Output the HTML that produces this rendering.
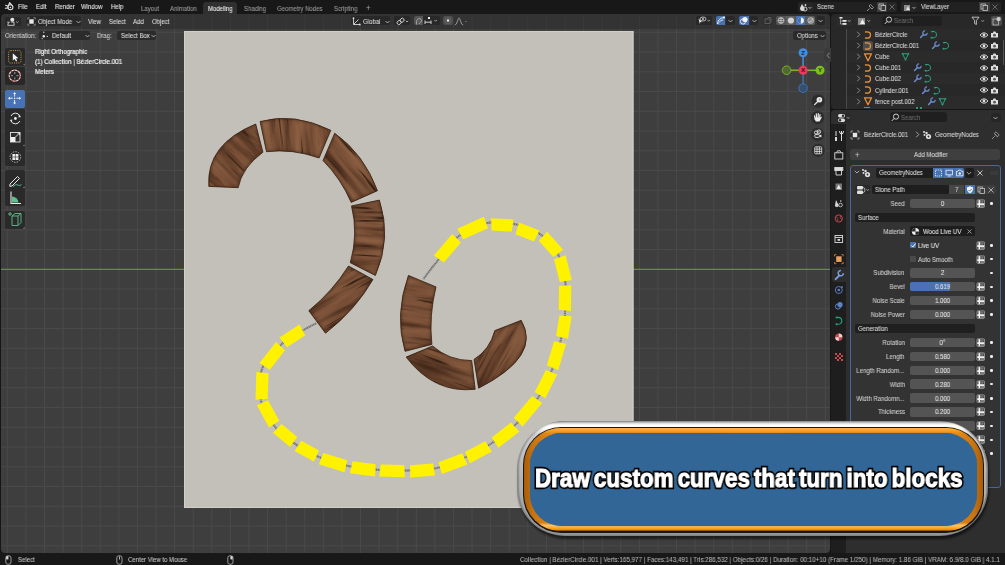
<!DOCTYPE html>
<html><head><meta charset="utf-8">
<style>
*{box-sizing:border-box;margin:0;padding:0}
html,body{width:1005px;height:565px;overflow:hidden;background:#161616}
body{-webkit-font-smoothing:antialiased;position:relative;font-family:"Liberation Sans",sans-serif;color:#d6d6d6;font-size:6.7px;line-height:1}
.a{position:absolute}
.t{position:absolute;white-space:nowrap;line-height:1;-webkit-text-stroke:0.08px currentColor;will-change:transform;transform:scaleX(0.9);transform-origin:0 50%;margin-top:0.6px}
#topbar{left:0;top:0;width:1005px;height:14px;background:#181818}
#vp{left:1px;top:14px;width:829px;height:539px;background:#3e3e3e;border-radius:4px;overflow:hidden}
#outl{left:831px;top:14px;width:174px;height:95px;background:#282828;border-radius:4px 0 0 4px;overflow:hidden}
#props{left:831px;top:110px;width:174px;height:443px;background:#2e2e2e;border-radius:4px 0 0 4px;overflow:hidden}
#status{left:0;top:553px;width:1005px;height:12px;background:#181818}
</style></head><body>
<div id="topbar" class="a"></div>
<div id="vp" class="a">
 <svg class="a" style="left:-1px;top:-14px" width="1005" height="565" viewBox="0 0 1005 565">
  <g stroke="#4a4a4a" stroke-width="1"><line x1="7.32" y1="14" x2="7.32" y2="553"/><line x1="25.91" y1="14" x2="25.91" y2="553"/><line x1="44.50" y1="14" x2="44.50" y2="553"/><line x1="63.09" y1="14" x2="63.09" y2="553"/><line x1="81.68" y1="14" x2="81.68" y2="553"/><line x1="100.27" y1="14" x2="100.27" y2="553"/><line x1="118.86" y1="14" x2="118.86" y2="553"/><line x1="137.45" y1="14" x2="137.45" y2="553"/><line x1="156.04" y1="14" x2="156.04" y2="553"/><line x1="174.63" y1="14" x2="174.63" y2="553"/><line x1="193.22" y1="14" x2="193.22" y2="553"/><line x1="211.81" y1="14" x2="211.81" y2="553"/><line x1="230.40" y1="14" x2="230.40" y2="553"/><line x1="248.99" y1="14" x2="248.99" y2="553"/><line x1="267.58" y1="14" x2="267.58" y2="553"/><line x1="286.17" y1="14" x2="286.17" y2="553"/><line x1="304.76" y1="14" x2="304.76" y2="553"/><line x1="323.35" y1="14" x2="323.35" y2="553"/><line x1="341.94" y1="14" x2="341.94" y2="553"/><line x1="360.53" y1="14" x2="360.53" y2="553"/><line x1="379.12" y1="14" x2="379.12" y2="553"/><line x1="397.71" y1="14" x2="397.71" y2="553"/><line x1="416.30" y1="14" x2="416.30" y2="553"/><line x1="434.89" y1="14" x2="434.89" y2="553"/><line x1="453.48" y1="14" x2="453.48" y2="553"/><line x1="472.07" y1="14" x2="472.07" y2="553"/><line x1="490.66" y1="14" x2="490.66" y2="553"/><line x1="509.25" y1="14" x2="509.25" y2="553"/><line x1="527.84" y1="14" x2="527.84" y2="553"/><line x1="546.43" y1="14" x2="546.43" y2="553"/><line x1="565.02" y1="14" x2="565.02" y2="553"/><line x1="583.61" y1="14" x2="583.61" y2="553"/><line x1="602.20" y1="14" x2="602.20" y2="553"/><line x1="620.79" y1="14" x2="620.79" y2="553"/><line x1="639.38" y1="14" x2="639.38" y2="553"/><line x1="657.97" y1="14" x2="657.97" y2="553"/><line x1="676.56" y1="14" x2="676.56" y2="553"/><line x1="695.15" y1="14" x2="695.15" y2="553"/><line x1="713.74" y1="14" x2="713.74" y2="553"/><line x1="732.33" y1="14" x2="732.33" y2="553"/><line x1="750.92" y1="14" x2="750.92" y2="553"/><line x1="769.51" y1="14" x2="769.51" y2="553"/><line x1="788.10" y1="14" x2="788.10" y2="553"/><line x1="806.69" y1="14" x2="806.69" y2="553"/><line x1="825.28" y1="14" x2="825.28" y2="553"/><line x1="0" y1="32.30" x2="830" y2="32.30"/><line x1="0" y1="52.05" x2="830" y2="52.05"/><line x1="0" y1="71.80" x2="830" y2="71.80"/><line x1="0" y1="91.55" x2="830" y2="91.55"/><line x1="0" y1="111.30" x2="830" y2="111.30"/><line x1="0" y1="131.05" x2="830" y2="131.05"/><line x1="0" y1="150.80" x2="830" y2="150.80"/><line x1="0" y1="170.55" x2="830" y2="170.55"/><line x1="0" y1="190.30" x2="830" y2="190.30"/><line x1="0" y1="210.05" x2="830" y2="210.05"/><line x1="0" y1="229.80" x2="830" y2="229.80"/><line x1="0" y1="249.55" x2="830" y2="249.55"/><line x1="0" y1="289.05" x2="830" y2="289.05"/><line x1="0" y1="308.80" x2="830" y2="308.80"/><line x1="0" y1="328.55" x2="830" y2="328.55"/><line x1="0" y1="348.30" x2="830" y2="348.30"/><line x1="0" y1="368.05" x2="830" y2="368.05"/><line x1="0" y1="387.80" x2="830" y2="387.80"/><line x1="0" y1="407.55" x2="830" y2="407.55"/><line x1="0" y1="427.30" x2="830" y2="427.30"/><line x1="0" y1="447.05" x2="830" y2="447.05"/><line x1="0" y1="466.80" x2="830" y2="466.80"/><line x1="0" y1="486.55" x2="830" y2="486.55"/><line x1="0" y1="506.30" x2="830" y2="506.30"/><line x1="0" y1="526.05" x2="830" y2="526.05"/><line x1="0" y1="545.80" x2="830" y2="545.80"/></g><line x1="0" y1="269.3" x2="830" y2="269.3" stroke="#6a8f2a" stroke-width="1.3"/>
  <rect x="184" y="31" width="449.5" height="477" fill="#c3c0ba"/><rect x="184.5" y="31.5" width="448.5" height="476" fill="none" stroke="#d2cfca" stroke-width="1"/>
  <defs><filter id="eblur"><feGaussianBlur stdDeviation="0.9"/></filter><clipPath id="wc0"><path d="M208.8,186.4 Q205.9,144.4 255.7,124.0 L262.9,152.2 Q241.8,167.9 238.2,187.7 L208.8,186.4 Z"/></clipPath><filter id="wf0" x="0" y="0" width="100%" height="100%" color-interpolation-filters="sRGB"><feTurbulence type="fractalNoise" baseFrequency="0.01 0.1" numOctaves="4" seed="3" result="n"/><feColorMatrix in="n" type="matrix" values="1 0 0 0 0  1 0 0 0 0  1 0 0 0 0  0 0 0 0 1" result="a"/><feComponentTransfer in="a" result="t"><feFuncR type="table" tableValues="0.15 0.27 0.39 0.48 0.53 0.57 0.63"/><feFuncG type="table" tableValues="0.08 0.16 0.25 0.32 0.36 0.40 0.44"/><feFuncB type="table" tableValues="0.05 0.10 0.17 0.22 0.25 0.28 0.32"/><feFuncA type="discrete" tableValues="1"/></feComponentTransfer><feTurbulence type="fractalNoise" baseFrequency="0.02 0.3" numOctaves="2" seed="5" result="n2"/><feColorMatrix in="n2" type="matrix" values="0 0 0 0 0.2  0 0 0 0 0.12  0 0 0 0 0.07  -7 0 0 0 2.45" result="lines0"/><feGaussianBlur in="lines0" stdDeviation="0.35" result="lines"/><feComposite in="lines" in2="t" operator="over"/></filter><clipPath id="wc1"><path d="M260.1,121.5 Q294.1,112.1 330.8,130.3 L319.1,158.0 Q292.8,148.5 266.5,151.7 L260.1,121.5 Z"/></clipPath><filter id="wf1" x="0" y="0" width="100%" height="100%" color-interpolation-filters="sRGB"><feTurbulence type="fractalNoise" baseFrequency="0.01 0.1" numOctaves="4" seed="10" result="n"/><feColorMatrix in="n" type="matrix" values="1 0 0 0 0  1 0 0 0 0  1 0 0 0 0  0 0 0 0 1" result="a"/><feComponentTransfer in="a" result="t"><feFuncR type="table" tableValues="0.15 0.27 0.39 0.48 0.53 0.57 0.63"/><feFuncG type="table" tableValues="0.08 0.16 0.25 0.32 0.36 0.40 0.44"/><feFuncB type="table" tableValues="0.05 0.10 0.17 0.22 0.25 0.28 0.32"/><feFuncA type="discrete" tableValues="1"/></feComponentTransfer><feTurbulence type="fractalNoise" baseFrequency="0.02 0.3" numOctaves="2" seed="16" result="n2"/><feColorMatrix in="n2" type="matrix" values="0 0 0 0 0.2  0 0 0 0 0.12  0 0 0 0 0.07  -7 0 0 0 2.45" result="lines0"/><feGaussianBlur in="lines0" stdDeviation="0.35" result="lines"/><feComposite in="lines" in2="t" operator="over"/></filter><clipPath id="wc2"><path d="M334.7,133.2 Q363.9,154.1 377.5,190.7 L351.2,202.4 Q340.9,178.6 323.0,160.5 L334.7,133.2 Z"/></clipPath><filter id="wf2" x="0" y="0" width="100%" height="100%" color-interpolation-filters="sRGB"><feTurbulence type="fractalNoise" baseFrequency="0.01 0.1" numOctaves="4" seed="17" result="n"/><feColorMatrix in="n" type="matrix" values="1 0 0 0 0  1 0 0 0 0  1 0 0 0 0  0 0 0 0 1" result="a"/><feComponentTransfer in="a" result="t"><feFuncR type="table" tableValues="0.15 0.27 0.39 0.48 0.53 0.57 0.63"/><feFuncG type="table" tableValues="0.08 0.16 0.25 0.32 0.36 0.40 0.44"/><feFuncB type="table" tableValues="0.05 0.10 0.17 0.22 0.25 0.28 0.32"/><feFuncA type="discrete" tableValues="1"/></feComponentTransfer><feTurbulence type="fractalNoise" baseFrequency="0.02 0.3" numOctaves="2" seed="27" result="n2"/><feColorMatrix in="n2" type="matrix" values="0 0 0 0 0.2  0 0 0 0 0.12  0 0 0 0 0.07  -7 0 0 0 2.45" result="lines0"/><feGaussianBlur in="lines0" stdDeviation="0.35" result="lines"/><feComposite in="lines" in2="t" operator="over"/></filter><clipPath id="wc3"><path d="M351.5,205.9 L379.4,200.1 Q391.8,238.2 375.4,275.5 L350.3,262.7 Q358.5,233.7 351.5,205.9 Z"/></clipPath><filter id="wf3" x="0" y="0" width="100%" height="100%" color-interpolation-filters="sRGB"><feTurbulence type="fractalNoise" baseFrequency="0.01 0.1" numOctaves="4" seed="24" result="n"/><feColorMatrix in="n" type="matrix" values="1 0 0 0 0  1 0 0 0 0  1 0 0 0 0  0 0 0 0 1" result="a"/><feComponentTransfer in="a" result="t"><feFuncR type="table" tableValues="0.15 0.27 0.39 0.48 0.53 0.57 0.63"/><feFuncG type="table" tableValues="0.08 0.16 0.25 0.32 0.36 0.40 0.44"/><feFuncB type="table" tableValues="0.05 0.10 0.17 0.22 0.25 0.28 0.32"/><feFuncA type="discrete" tableValues="1"/></feComponentTransfer><feTurbulence type="fractalNoise" baseFrequency="0.02 0.3" numOctaves="2" seed="38" result="n2"/><feColorMatrix in="n2" type="matrix" values="0 0 0 0 0.2  0 0 0 0 0.12  0 0 0 0 0.07  -7 0 0 0 2.45" result="lines0"/><feGaussianBlur in="lines0" stdDeviation="0.35" result="lines"/><feComposite in="lines" in2="t" operator="over"/></filter><clipPath id="wc4"><path d="M348.5,266.0 L372.9,279.5 Q355.8,309.6 325.5,333.2 L308.8,310.7 Q332.4,291.6 348.5,266.0 Z"/></clipPath><filter id="wf4" x="0" y="0" width="100%" height="100%" color-interpolation-filters="sRGB"><feTurbulence type="fractalNoise" baseFrequency="0.01 0.1" numOctaves="4" seed="31" result="n"/><feColorMatrix in="n" type="matrix" values="1 0 0 0 0  1 0 0 0 0  1 0 0 0 0  0 0 0 0 1" result="a"/><feComponentTransfer in="a" result="t"><feFuncR type="table" tableValues="0.15 0.27 0.39 0.48 0.53 0.57 0.63"/><feFuncG type="table" tableValues="0.08 0.16 0.25 0.32 0.36 0.40 0.44"/><feFuncB type="table" tableValues="0.05 0.10 0.17 0.22 0.25 0.28 0.32"/><feFuncA type="discrete" tableValues="1"/></feComponentTransfer><feTurbulence type="fractalNoise" baseFrequency="0.02 0.3" numOctaves="2" seed="49" result="n2"/><feColorMatrix in="n2" type="matrix" values="0 0 0 0 0.2  0 0 0 0 0.12  0 0 0 0 0.07  -7 0 0 0 2.45" result="lines0"/><feGaussianBlur in="lines0" stdDeviation="0.35" result="lines"/><feComposite in="lines" in2="t" operator="over"/></filter><clipPath id="wc5"><path d="M408.4,275.4 L436.0,286.9 Q428.8,315.8 431.9,344.4 L405.0,351.3 Q394.3,314.6 408.4,275.4 Z"/></clipPath><filter id="wf5" x="0" y="0" width="100%" height="100%" color-interpolation-filters="sRGB"><feTurbulence type="fractalNoise" baseFrequency="0.01 0.1" numOctaves="4" seed="38" result="n"/><feColorMatrix in="n" type="matrix" values="1 0 0 0 0  1 0 0 0 0  1 0 0 0 0  0 0 0 0 1" result="a"/><feComponentTransfer in="a" result="t"><feFuncR type="table" tableValues="0.15 0.27 0.39 0.48 0.53 0.57 0.63"/><feFuncG type="table" tableValues="0.08 0.16 0.25 0.32 0.36 0.40 0.44"/><feFuncB type="table" tableValues="0.05 0.10 0.17 0.22 0.25 0.28 0.32"/><feFuncA type="discrete" tableValues="1"/></feComponentTransfer><feTurbulence type="fractalNoise" baseFrequency="0.02 0.3" numOctaves="2" seed="60" result="n2"/><feColorMatrix in="n2" type="matrix" values="0 0 0 0 0.2  0 0 0 0 0.12  0 0 0 0 0.07  -7 0 0 0 2.45" result="lines0"/><feGaussianBlur in="lines0" stdDeviation="0.35" result="lines"/><feComposite in="lines" in2="t" operator="over"/></filter><clipPath id="wc6"><path d="M406.1,357.1 L432.6,346.0 Q448.9,360.5 471.7,360.6 L475.2,389.3 Q434.0,393.8 406.1,357.1 Z"/></clipPath><filter id="wf6" x="0" y="0" width="100%" height="100%" color-interpolation-filters="sRGB"><feTurbulence type="fractalNoise" baseFrequency="0.01 0.1" numOctaves="4" seed="45" result="n"/><feColorMatrix in="n" type="matrix" values="1 0 0 0 0  1 0 0 0 0  1 0 0 0 0  0 0 0 0 1" result="a"/><feComponentTransfer in="a" result="t"><feFuncR type="table" tableValues="0.15 0.27 0.39 0.48 0.53 0.57 0.63"/><feFuncG type="table" tableValues="0.08 0.16 0.25 0.32 0.36 0.40 0.44"/><feFuncB type="table" tableValues="0.05 0.10 0.17 0.22 0.25 0.28 0.32"/><feFuncA type="discrete" tableValues="1"/></feComponentTransfer><feTurbulence type="fractalNoise" baseFrequency="0.02 0.3" numOctaves="2" seed="71" result="n2"/><feColorMatrix in="n2" type="matrix" values="0 0 0 0 0.2  0 0 0 0 0.12  0 0 0 0 0.07  -7 0 0 0 2.45" result="lines0"/><feGaussianBlur in="lines0" stdDeviation="0.35" result="lines"/><feComposite in="lines" in2="t" operator="over"/></filter><clipPath id="wc7"><path d="M474.0,359.4 Q489.6,350.0 494.8,330.6 L521.2,320.3 Q542.1,355.8 478.6,388.2 L474.0,359.4 Z"/></clipPath><filter id="wf7" x="0" y="0" width="100%" height="100%" color-interpolation-filters="sRGB"><feTurbulence type="fractalNoise" baseFrequency="0.01 0.1" numOctaves="4" seed="52" result="n"/><feColorMatrix in="n" type="matrix" values="1 0 0 0 0  1 0 0 0 0  1 0 0 0 0  0 0 0 0 1" result="a"/><feComponentTransfer in="a" result="t"><feFuncR type="table" tableValues="0.15 0.27 0.39 0.48 0.53 0.57 0.63"/><feFuncG type="table" tableValues="0.08 0.16 0.25 0.32 0.36 0.40 0.44"/><feFuncB type="table" tableValues="0.05 0.10 0.17 0.22 0.25 0.28 0.32"/><feFuncA type="discrete" tableValues="1"/></feComponentTransfer><feTurbulence type="fractalNoise" baseFrequency="0.02 0.3" numOctaves="2" seed="82" result="n2"/><feColorMatrix in="n2" type="matrix" values="0 0 0 0 0.2  0 0 0 0 0.12  0 0 0 0 0.07  -7 0 0 0 2.45" result="lines0"/><feGaussianBlur in="lines0" stdDeviation="0.35" result="lines"/><feComposite in="lines" in2="t" operator="over"/></filter></defs><g clip-path="url(#wc0)"><rect x="188.5" y="111.5" width="100" height="100" fill="#80533a" transform="rotate(45 238.5 161.5)" filter="url(#wf0)"/><path d="M208.8,186.4 Q205.9,144.4 255.7,124.0 L262.9,152.2 Q241.8,167.9 238.2,187.7 L208.8,186.4 Z" fill="none" stroke="#3e2414" stroke-width="3" opacity="0.4" filter="url(#eblur)"/></g><path d="M208.8,186.4 Q205.9,144.4 255.7,124.0 L262.9,152.2 Q241.8,167.9 238.2,187.7 L208.8,186.4 Z" fill="none" stroke="#35200f" stroke-width="0.8"/><g clip-path="url(#wc1)"><rect x="244.0" y="88.7" width="100" height="100" fill="#80533a" transform="rotate(85 294.0 138.7)" filter="url(#wf1)"/><path d="M260.1,121.5 Q294.1,112.1 330.8,130.3 L319.1,158.0 Q292.8,148.5 266.5,151.7 L260.1,121.5 Z" fill="none" stroke="#3e2414" stroke-width="3" opacity="0.4" filter="url(#eblur)"/></g><path d="M260.1,121.5 Q294.1,112.1 330.8,130.3 L319.1,158.0 Q292.8,148.5 266.5,151.7 L260.1,121.5 Z" fill="none" stroke="#35200f" stroke-width="0.8"/><g clip-path="url(#wc2)"><rect x="297.6" y="120.8" width="100" height="100" fill="#80533a" transform="rotate(50 347.6 170.8)" filter="url(#wf2)"/><path d="M334.7,133.2 Q363.9,154.1 377.5,190.7 L351.2,202.4 Q340.9,178.6 323.0,160.5 L334.7,133.2 Z" fill="none" stroke="#3e2414" stroke-width="3" opacity="0.4" filter="url(#eblur)"/></g><path d="M334.7,133.2 Q363.9,154.1 377.5,190.7 L351.2,202.4 Q340.9,178.6 323.0,160.5 L334.7,133.2 Z" fill="none" stroke="#35200f" stroke-width="0.8"/><g clip-path="url(#wc3)"><rect x="316.0" y="186.0" width="100" height="100" fill="#80533a" transform="rotate(3 366.0 236.0)" filter="url(#wf3)"/><path d="M351.5,205.9 L379.4,200.1 Q391.8,238.2 375.4,275.5 L350.3,262.7 Q358.5,233.7 351.5,205.9 Z" fill="none" stroke="#3e2414" stroke-width="3" opacity="0.4" filter="url(#eblur)"/></g><path d="M351.5,205.9 L379.4,200.1 Q391.8,238.2 375.4,275.5 L350.3,262.7 Q358.5,233.7 351.5,205.9 Z" fill="none" stroke="#35200f" stroke-width="0.8"/><g clip-path="url(#wc4)"><rect x="289.8" y="247.9" width="100" height="100" fill="#80533a" transform="rotate(-30 339.8 297.9)" filter="url(#wf4)"/><path d="M348.5,266.0 L372.9,279.5 Q355.8,309.6 325.5,333.2 L308.8,310.7 Q332.4,291.6 348.5,266.0 Z" fill="none" stroke="#3e2414" stroke-width="3" opacity="0.4" filter="url(#eblur)"/></g><path d="M348.5,266.0 L372.9,279.5 Q355.8,309.6 325.5,333.2 L308.8,310.7 Q332.4,291.6 348.5,266.0 Z" fill="none" stroke="#35200f" stroke-width="0.8"/><g clip-path="url(#wc5)"><rect x="368.9" y="264.6" width="100" height="100" fill="#80533a" transform="rotate(8 418.9 314.6)" filter="url(#wf5)"/><path d="M408.4,275.4 L436.0,286.9 Q428.8,315.8 431.9,344.4 L405.0,351.3 Q394.3,314.6 408.4,275.4 Z" fill="none" stroke="#3e2414" stroke-width="3" opacity="0.4" filter="url(#eblur)"/></g><path d="M408.4,275.4 L436.0,286.9 Q428.8,315.8 431.9,344.4 L405.0,351.3 Q394.3,314.6 408.4,275.4 Z" fill="none" stroke="#35200f" stroke-width="0.8"/><g clip-path="url(#wc6)"><rect x="395.6" y="315.6" width="100" height="100" fill="#80533a" transform="rotate(20 445.6 365.6)" filter="url(#wf6)"/><path d="M406.1,357.1 L432.6,346.0 Q448.9,360.5 471.7,360.6 L475.2,389.3 Q434.0,393.8 406.1,357.1 Z" fill="none" stroke="#3e2414" stroke-width="3" opacity="0.4" filter="url(#eblur)"/></g><path d="M406.1,357.1 L432.6,346.0 Q448.9,360.5 471.7,360.6 L475.2,389.3 Q434.0,393.8 406.1,357.1 Z" fill="none" stroke="#35200f" stroke-width="0.8"/><g clip-path="url(#wc7)"><rect x="446.1" y="300.2" width="100" height="100" fill="#80533a" transform="rotate(-60 496.1 350.2)" filter="url(#wf7)"/><path d="M474.0,359.4 Q489.6,350.0 494.8,330.6 L521.2,320.3 Q542.1,355.8 478.6,388.2 L474.0,359.4 Z" fill="none" stroke="#3e2414" stroke-width="3" opacity="0.4" filter="url(#eblur)"/></g><path d="M474.0,359.4 Q489.6,350.0 494.8,330.6 L521.2,320.3 Q542.1,355.8 478.6,388.2 L474.0,359.4 Z" fill="none" stroke="#35200f" stroke-width="0.8"/>
  <path d="M316.5,323.0 L315.5,323.6 L314.1,324.3 L312.5,325.1 L310.7,326.0 L308.8,327.1 L306.7,328.2 L304.5,329.5 L302.3,330.8 L300.0,332.2 L297.4,333.6 L294.8,335.1 L292.0,336.7 L289.2,338.4 L286.4,340.3 L283.7,342.3 L281.1,344.6 L278.5,347.1 L275.8,349.8 L273.0,352.6 L270.3,355.7 L267.7,358.8 L265.5,362.1 L263.5,365.5 L262.0,369.0 L260.9,372.7 L260.1,376.6 L259.6,380.7 L259.4,384.9 L259.5,389.1 L259.8,393.2 L260.3,397.2 L261.0,401.0 L262.0,404.6 L263.3,408.1 L264.9,411.6 L266.8,414.9 L268.8,418.2 L270.9,421.3 L273.0,424.2 L275.2,427.0 L277.4,429.6 L279.8,432.0 L282.2,434.3 L284.8,436.4 L287.4,438.4 L290.1,440.3 L292.8,442.2 L295.5,444.1 L298.2,445.9 L300.9,447.7 L303.7,449.3 L306.5,450.9 L309.3,452.5 L312.3,454.0 L315.4,455.4 L318.6,456.8 L322.0,458.2 L325.6,459.5 L329.3,460.7 L333.1,462.0 L337.0,463.1 L340.8,464.2 L344.7,465.1 L348.4,466.0 L352.1,466.8 L355.8,467.4 L359.4,468.0 L363.1,468.4 L366.7,468.8 L370.4,469.2 L374.0,469.5 L377.7,469.8 L381.4,470.1 L385.1,470.3 L388.8,470.4 L392.6,470.5 L396.3,470.6 L400.0,470.6 L403.7,470.6 L407.4,470.5 L411.1,470.4 L414.7,470.3 L418.3,470.2 L422.0,470.0 L425.6,469.8 L429.2,469.4 L432.8,468.8 L436.5,468.1 L440.2,467.1 L443.9,466.0 L447.7,464.7 L451.5,463.3 L455.2,461.7 L458.9,460.2 L462.5,458.6 L466.0,457.0 L469.4,455.4 L472.7,453.9 L476.0,452.2 L479.1,450.6 L482.3,448.9 L485.4,447.1 L488.5,445.2 L491.6,443.2 L494.7,441.1 L497.8,439.0 L500.8,436.9 L503.9,434.6 L506.9,432.2 L509.8,429.8 L512.8,427.2 L515.7,424.4 L518.6,421.5 L521.6,418.3 L524.6,415.0 L527.5,411.6 L530.3,408.2 L533.1,404.7 L535.6,401.2 L538.0,397.8 L540.2,394.4 L542.2,391.0 L544.0,387.6 L545.7,384.2 L547.4,380.8 L548.9,377.3 L550.4,373.8 L551.8,370.2 L553.2,366.5 L554.5,362.8 L555.7,358.9 L556.9,355.1 L558.0,351.2 L559.0,347.4 L559.9,343.7 L560.8,340.1 L561.6,336.6 L562.3,333.3 L562.9,330.0 L563.4,326.8 L563.9,323.6 L564.3,320.3 L564.7,317.0 L565.0,313.5 L565.3,309.9 L565.6,306.2 L565.8,302.5 L566.0,298.7 L566.0,294.9 L566.0,291.1 L565.8,287.3 L565.5,283.6 L565.0,279.9 L564.5,276.1 L563.9,272.4 L563.1,268.6 L562.2,265.0 L561.1,261.4 L559.8,258.0 L558.3,254.8 L556.5,251.7 L554.5,248.7 L552.3,245.9 L550.0,243.1 L547.5,240.5 L544.9,238.1 L542.2,235.8 L539.5,233.8 L536.7,232.0 L533.9,230.4 L530.9,229.0 L527.8,227.8 L524.7,226.7 L521.6,225.8 L518.4,224.9 L515.2,224.2 L512.0,223.5 L508.8,222.9 L505.6,222.4 L502.3,222.0 L499.0,221.9 L495.6,221.9 L492.1,222.2 L488.6,222.8 L484.9,223.7 L481.0,225.0 L477.0,226.4 L473.0,228.1 L469.0,230.0 L465.1,232.1 L461.5,234.3 L458.2,236.5 L455.2,238.9 L452.5,241.6 L449.9,244.5 L447.6,247.5 L445.3,250.5 L443.1,253.5 L441.0,256.4 L438.8,259.2 L436.6,262.0 L434.3,264.8 L432.0,267.7 L429.8,270.6 L427.8,273.2 L426.0,275.6 L424.5,277.6 L423.3,279.1 L423.3,279.1" fill="none" stroke="#6c6c6c" stroke-width="1.9"/><path d="M316.5,323.0 L315.5,323.6 L314.1,324.3 L312.5,325.1 L310.7,326.0 L308.8,327.1 L306.7,328.2 L304.5,329.5 L302.3,330.8 L300.0,332.2 L297.4,333.6 L294.8,335.1 L292.0,336.7 L289.2,338.4 L286.4,340.3 L283.7,342.3 L281.1,344.6 L278.5,347.1 L275.8,349.8 L273.0,352.6 L270.3,355.7 L267.7,358.8 L265.5,362.1 L263.5,365.5 L262.0,369.0 L260.9,372.7 L260.1,376.6 L259.6,380.7 L259.4,384.9 L259.5,389.1 L259.8,393.2 L260.3,397.2 L261.0,401.0 L262.0,404.6 L263.3,408.1 L264.9,411.6 L266.8,414.9 L268.8,418.2 L270.9,421.3 L273.0,424.2 L275.2,427.0 L277.4,429.6 L279.8,432.0 L282.2,434.3 L284.8,436.4 L287.4,438.4 L290.1,440.3 L292.8,442.2 L295.5,444.1 L298.2,445.9 L300.9,447.7 L303.7,449.3 L306.5,450.9 L309.3,452.5 L312.3,454.0 L315.4,455.4 L318.6,456.8 L322.0,458.2 L325.6,459.5 L329.3,460.7 L333.1,462.0 L337.0,463.1 L340.8,464.2 L344.7,465.1 L348.4,466.0 L352.1,466.8 L355.8,467.4 L359.4,468.0 L363.1,468.4 L366.7,468.8 L370.4,469.2 L374.0,469.5 L377.7,469.8 L381.4,470.1 L385.1,470.3 L388.8,470.4 L392.6,470.5 L396.3,470.6 L400.0,470.6 L403.7,470.6 L407.4,470.5 L411.1,470.4 L414.7,470.3 L418.3,470.2 L422.0,470.0 L425.6,469.8 L429.2,469.4 L432.8,468.8 L436.5,468.1 L440.2,467.1 L443.9,466.0 L447.7,464.7 L451.5,463.3 L455.2,461.7 L458.9,460.2 L462.5,458.6 L466.0,457.0 L469.4,455.4 L472.7,453.9 L476.0,452.2 L479.1,450.6 L482.3,448.9 L485.4,447.1 L488.5,445.2 L491.6,443.2 L494.7,441.1 L497.8,439.0 L500.8,436.9 L503.9,434.6 L506.9,432.2 L509.8,429.8 L512.8,427.2 L515.7,424.4 L518.6,421.5 L521.6,418.3 L524.6,415.0 L527.5,411.6 L530.3,408.2 L533.1,404.7 L535.6,401.2 L538.0,397.8 L540.2,394.4 L542.2,391.0 L544.0,387.6 L545.7,384.2 L547.4,380.8 L548.9,377.3 L550.4,373.8 L551.8,370.2 L553.2,366.5 L554.5,362.8 L555.7,358.9 L556.9,355.1 L558.0,351.2 L559.0,347.4 L559.9,343.7 L560.8,340.1 L561.6,336.6 L562.3,333.3 L562.9,330.0 L563.4,326.8 L563.9,323.6 L564.3,320.3 L564.7,317.0 L565.0,313.5 L565.3,309.9 L565.6,306.2 L565.8,302.5 L566.0,298.7 L566.0,294.9 L566.0,291.1 L565.8,287.3 L565.5,283.6 L565.0,279.9 L564.5,276.1 L563.9,272.4 L563.1,268.6 L562.2,265.0 L561.1,261.4 L559.8,258.0 L558.3,254.8 L556.5,251.7 L554.5,248.7 L552.3,245.9 L550.0,243.1 L547.5,240.5 L544.9,238.1 L542.2,235.8 L539.5,233.8 L536.7,232.0 L533.9,230.4 L530.9,229.0 L527.8,227.8 L524.7,226.7 L521.6,225.8 L518.4,224.9 L515.2,224.2 L512.0,223.5 L508.8,222.9 L505.6,222.4 L502.3,222.0 L499.0,221.9 L495.6,221.9 L492.1,222.2 L488.6,222.8 L484.9,223.7 L481.0,225.0 L477.0,226.4 L473.0,228.1 L469.0,230.0 L465.1,232.1 L461.5,234.3 L458.2,236.5 L455.2,238.9 L452.5,241.6 L449.9,244.5 L447.6,247.5 L445.3,250.5 L443.1,253.5 L441.0,256.4 L438.8,259.2 L436.6,262.0 L434.3,264.8 L432.0,267.7 L429.8,270.6 L427.8,273.2 L426.0,275.6 L424.5,277.6 L423.3,279.1 L423.3,279.1" fill="none" stroke="#b4b4b4" stroke-width="1.9" stroke-dasharray="0.7 1.1"/><path d="M299.40,324.52 L279.54,337.45 L287.04,347.13 L305.22,335.29Z M276.05,341.99 L259.54,363.09 L269.76,369.82 L285.04,350.30Z M256.34,371.91 L255.47,399.71 L267.69,399.09 L268.50,373.29Z M256.85,405.27 L269.04,427.58 L279.27,420.86 L268.04,400.30Z M273.03,432.67 L290.11,447.06 L297.21,437.09 L281.65,423.98Z M294.55,450.91 L313.97,461.58 L318.97,450.41 L301.31,440.70Z M318.81,464.25 L344.59,472.21 L347.24,460.26 L323.36,452.89Z M349.95,473.22 L375.08,476.48 L375.66,464.25 L352.51,461.25Z M379.41,476.60 L404.91,477.20 L404.19,464.98 L380.69,464.42Z M410.14,477.51 L435.06,475.45 L433.06,463.38 L410.14,465.27Z M441.86,474.02 L467.43,464.40 L462.20,453.33 L438.50,462.25Z M469.94,463.27 L491.85,451.47 L485.18,441.20 L465.03,452.06Z M498.46,447.82 L519.25,431.60 L510.95,422.60 L491.74,437.58Z M522.57,426.41 L542.18,403.03 L532.18,395.96 L513.87,417.81Z M545.30,398.35 L557.22,374.51 L545.86,369.94 L534.83,392.00Z M558.25,369.89 L566.04,343.81 L554.07,341.27 L546.84,365.43Z M568.05,338.78 L571.60,316.33 L559.39,315.41 L556.16,335.89Z M570.88,310.95 L571.31,285.25 L559.10,286.05 L558.70,309.75Z M571.81,280.08 L565.63,255.36 L554.03,259.29 L559.73,282.07Z M563.14,249.67 L547.15,231.80 L538.72,240.68 L553.39,257.06Z M539.44,230.56 L519.04,222.50 L515.49,234.21 L534.03,241.53Z M513.52,219.40 L491.12,218.22 L491.48,230.45 L511.88,231.53Z M483.88,216.65 L457.31,228.63 L463.23,239.34 L487.98,228.19Z M452.24,233.90 L433.88,255.38 L443.81,262.54 L460.87,242.58Z" fill="#fff200"/>
 </svg>
</div>
<div id="outl" class="a"></div>
<div id="props" class="a"></div>
<div id="status" class="a"></div>

<!-- TOP BAR -->
<svg class="a" style="left:3px;top:1px" width="12" height="12" viewBox="3 1 12 12"><circle cx="10.4" cy="7.3" r="2.5" fill="none" stroke="#e4e4e4" stroke-width="1.1"/><circle cx="10.4" cy="7.5" r="0.8" fill="#e4e4e4"/><path d="M8.6,5.2 L9.6,2.6 L11.5,4.8 M8.2,6.2 L5.6,5.3 M8.2,7.9 L5.3,8.3" fill="none" stroke="#e4e4e4" stroke-width="1.1" stroke-linecap="round" stroke-linejoin="round"/></svg>
<div class="t" style="left:18.3px;top:3.8px;color:#e6e6e6">File</div>
<div class="t" style="left:35.8px;top:3.8px;color:#e6e6e6">Edit</div>
<div class="t" style="left:54.7px;top:3.8px;color:#e6e6e6">Render</div>
<div class="t" style="left:80.6px;top:3.8px;color:#e6e6e6">Window</div>
<div class="t" style="left:110.8px;top:3.8px;color:#e6e6e6">Help</div>
<div class="a" style="left:203.4px;top:2px;width:34px;height:12px;background:#303030;border-radius:3px 3px 0 0"></div>
<div class="t" style="left:141.2px;top:5.3px;color:#9a9a9a">Layout</div>
<div class="t" style="left:169.8px;top:5.3px;color:#9a9a9a">Animation</div>
<div class="t" style="left:207.6px;top:5.3px;color:#f0f0f0">Modeling</div>
<div class="t" style="left:243.9px;top:5.3px;color:#9a9a9a">Shading</div>
<div class="t" style="left:276.8px;top:5.3px;color:#9a9a9a">Geometry Nodes</div>
<div class="t" style="left:333.5px;top:5.3px;color:#9a9a9a">Scripting</div>
<div class="t" style="left:366px;top:3.6px;color:#b0b0b0;font-size:8.5px">+</div>
<!-- scene selector -->
<div class="a" style="left:797.5px;top:2px;width:16px;height:10px;background:#262626;border-radius:2px"></div>
<svg class="a" style="left:799px;top:2.5px" width="14" height="9" viewBox="0 0 14 9"><path d="M3,1 L1,5 Q1,8 3.5,8 Q6,8 5.5,5 Z" fill="#d8d8d8"/><circle cx="6" cy="6" r="2" fill="none" stroke="#d8d8d8" stroke-width="0.9"/><circle cx="6.5" cy="2" r="0.9" fill="#d8d8d8"/><path d="M9.5,4 L11,5.5 L12.5,4" fill="none" stroke="#c8c8c8" stroke-width="0.8"/></svg>
<div class="a" style="left:814.2px;top:2px;width:62.4px;height:10px;background:#212121"></div>
<div class="t" style="left:817.4px;top:3.9px;color:#dcdcdc">Scene</div>
<svg class="a" style="left:866px;top:2.5px" width="9" height="9" viewBox="0 0 9 9"><path d="M1,8 L3.5,5.5 M3,3 L6,6 M4.5,1.5 L7.5,4.5 L6,6 L3,3 Z" fill="none" stroke="#9a9a9a" stroke-width="0.9"/></svg>
<div class="a" style="left:876.6px;top:2px;width:10.7px;height:10px;background:#3b3b3b"></div>
<svg class="a" style="left:877.5px;top:3px" width="9" height="8" viewBox="0 0 9 8"><rect x="1" y="1" width="4.5" height="5" fill="none" stroke="#c8c8c8" stroke-width="0.8"/><rect x="3" y="2.5" width="4.5" height="5" fill="#3b3b3b" stroke="#c8c8c8" stroke-width="0.8"/></svg>
<div class="a" style="left:887.3px;top:2px;width:9.7px;height:10px;background:#252525;border-radius:0 2px 2px 0"></div>
<svg class="a" style="left:889px;top:4px" width="6" height="6" viewBox="0 0 6 6"><path d="M0.5,0.5 L5.5,5.5 M5.5,0.5 L0.5,5.5" stroke="#777" stroke-width="0.8"/></svg>
<div class="a" style="left:901.3px;top:2px;width:15.4px;height:10px;background:#262626;border-radius:2px"></div>
<svg class="a" style="left:902.5px;top:2.5px" width="14" height="9" viewBox="0 0 14 9"><rect x="1" y="2" width="6" height="6" fill="#8a8a8a"/><path d="M3,7 L5,3 L7,7 Z" fill="#e0e0e0"/><path d="M9.5,4 L11,5.5 L12.5,4" fill="none" stroke="#c8c8c8" stroke-width="0.8"/></svg>
<div class="a" style="left:917.3px;top:2px;width:62px;height:10px;background:#212121"></div>
<div class="t" style="left:920.5px;top:3.9px;color:#dcdcdc">ViewLayer</div>
<div class="a" style="left:979.3px;top:2px;width:10.7px;height:10px;background:#3b3b3b"></div>
<svg class="a" style="left:980.2px;top:3px" width="9" height="8" viewBox="0 0 9 8"><rect x="1" y="1" width="4.5" height="5" fill="none" stroke="#c8c8c8" stroke-width="0.8"/><rect x="3" y="2.5" width="4.5" height="5" fill="#3b3b3b" stroke="#c8c8c8" stroke-width="0.8"/></svg>
<div class="a" style="left:990px;top:2px;width:10.7px;height:10px;background:#252525;border-radius:0 2px 2px 0"></div>
<svg class="a" style="left:992.3px;top:4px" width="6" height="6" viewBox="0 0 6 6"><path d="M0.5,0.5 L5.5,5.5 M5.5,0.5 L0.5,5.5" stroke="#777" stroke-width="0.8"/></svg>

<!-- HEADER -->
<div class="a" style="left:1px;top:14px;width:829px;height:15px;background:rgba(40,40,40,0.5);border-radius:4px 4px 0 0"></div>
<!-- editor type -->
<div class="a" style="left:5px;top:16.5px;width:15.5px;height:9.5px;background:#282828;border-radius:2px"></div>
<svg class="a" style="left:6px;top:16.5px" width="14" height="10" viewBox="0 0 14 10"><circle cx="6.3" cy="2.8" r="2" fill="#e4e4e4"/><path d="M1.2,5.2 L3.8,5.2 M5.2,5.2 L8.6,5.2 M1.5,8.3 L8.5,8.3 M2.4,5.6 L1.8,8 M7.8,5.6 L8.3,8" fill="none" stroke="#d0d0d0" stroke-width="0.9"/><path d="M10.2,4.5 L11.3,5.6 L12.4,4.5" fill="none" stroke="#c8c8c8" stroke-width="0.8"/></svg>
<!-- object mode -->
<div class="a" style="left:25.5px;top:16.3px;width:55px;height:9.8px;background:#282828;border-radius:2px"></div>
<svg class="a" style="left:27px;top:16.8px" width="9" height="9" viewBox="0 0 9 9"><rect x="2.3" y="2.3" width="4.4" height="4.4" fill="#e8e8e8"/><path d="M0.8,2.5 L0.8,0.8 L2.5,0.8 M6.5,0.8 L8.2,0.8 L8.2,2.5 M8.2,6.5 L8.2,8.2 L6.5,8.2 M2.5,8.2 L0.8,8.2 L0.8,6.5" fill="none" stroke="#bcbcbc" stroke-width="0.7"/></svg>
<div class="t" style="left:37.8px;top:18px;color:#dedede">Object Mode</div>
<svg class="a" style="left:76px;top:19.5px" width="5" height="4" viewBox="0 0 5 4"><path d="M0.5,1 L2.5,3 L4.5,1" fill="none" stroke="#c8c8c8" stroke-width="0.8"/></svg>
<div class="t" style="left:87.6px;top:18px;color:#dedede">View</div>
<div class="t" style="left:108.5px;top:18px;color:#dedede">Select</div>
<div class="t" style="left:133.3px;top:18px;color:#dedede">Add</div>
<div class="t" style="left:152.2px;top:18px;color:#dedede">Object</div>
<!-- Global etc -->
<div class="a" style="left:351px;top:16.3px;width:39px;height:9px;background:#282828;border-radius:2px"></div>
<svg class="a" style="left:352px;top:16.5px" width="9" height="9" viewBox="0 0 9 9"><path d="M1.5,1 L1.5,7.5 L8,7.5 M1.5,7.5 L6.5,2.5" fill="none" stroke="#d8d8d8" stroke-width="0.9"/><circle cx="1.5" cy="1.2" r="0.9" fill="#e0e0e0"/><circle cx="7.8" cy="7.5" r="0.9" fill="#e0e0e0"/></svg>
<div class="t" style="left:363.2px;top:18px;color:#dedede">Global</div>
<svg class="a" style="left:385px;top:19.5px" width="5" height="4" viewBox="0 0 5 4"><path d="M0.5,1 L2.5,3 L4.5,1" fill="none" stroke="#c8c8c8" stroke-width="0.8"/></svg>
<div class="a" style="left:394.3px;top:16.3px;width:15.3px;height:9px;background:#282828;border-radius:2px"></div>
<svg class="a" style="left:395.5px;top:16.5px" width="14" height="9" viewBox="0 0 14 9"><g fill="none" stroke="#dcdcdc" stroke-width="0.9"><rect x="1" y="3.8" width="4.2" height="3.6" rx="1.8" transform="rotate(-40 3 5.6)"/><rect x="4" y="1.5" width="4.2" height="3.6" rx="1.8" transform="rotate(-40 6 3.3)"/></g><path d="M9.8,3.8 L11,5 L12.2,3.8" fill="none" stroke="#c8c8c8" stroke-width="0.8"/></svg>
<div class="a" style="left:413.8px;top:16.3px;width:25.8px;height:9px;background:#282828;border-radius:2px"></div>
<div class="a" style="left:413.8px;top:16.3px;width:9px;height:9px;background:#565656;border-radius:2px 0 0 2px"></div>
<svg class="a" style="left:414.5px;top:16.5px" width="8" height="9" viewBox="0 0 8 9"><path d="M1.5,7.5 Q1,2 4,1.5 Q7,1.5 6.5,4.5 Q5,5 4,7" fill="none" stroke="#a8a8a8" stroke-width="0.9"/></svg>
<svg class="a" style="left:423.5px;top:16.3px" width="16" height="9" viewBox="0 0 16 9"><path d="M1,4.5 L1,8 M1,6.2 L7,6.2 M7,4.5 L7,8" fill="none" stroke="#e0e0e0" stroke-width="0.9"/><rect x="4" y="1" width="2" height="2" fill="#f0f0f0"/><path d="M10.5,4 L11.7,5.2 L12.9,4" fill="none" stroke="#c8c8c8" stroke-width="0.8"/></svg>
<div class="a" style="left:443px;top:16.3px;width:10px;height:9px;background:#4e4e4e;border-radius:2px"></div>
<svg class="a" style="left:443px;top:16.3px" width="10" height="9" viewBox="0 0 10 9"><circle cx="5" cy="4.5" r="3" fill="none" stroke="#6a6a6a" stroke-width="0.8"/><circle cx="5" cy="4.5" r="1.2" fill="#e8e8e8"/></svg>
<svg class="a" style="left:454px;top:16.5px" width="15" height="9" viewBox="0 0 15 9"><path d="M0.8,8 Q2.5,8 3.5,4 Q4.5,0.8 5,0.8 Q5.5,0.8 6.5,4 Q7.5,8 9.2,8" fill="none" stroke="#aaaaaa" stroke-width="0.8"/><path d="M11,4 L12,5 L13,4" fill="none" stroke="#777" stroke-width="0.7"/></svg>
<!-- right header -->
<div class="a" style="left:696.3px;top:16.3px;width:15.3px;height:9px;background:#282828;border-radius:2px"></div>
<svg class="a" style="left:696px;top:16.3px" width="16" height="9" viewBox="0 0 16 9"><ellipse cx="7" cy="3" rx="3" ry="2" fill="none" stroke="#d8d8d8" stroke-width="0.8"/><circle cx="7" cy="3" r="0.9" fill="#d8d8d8"/><path d="M2.5,2.5 L6,6 L4,6.3 L4,8.5 Z" fill="#f0f0f0"/><path d="M11.5,4 L12.7,5.2 L13.9,4" fill="none" stroke="#c8c8c8" stroke-width="0.8"/></svg>
<div class="a" style="left:715.5px;top:16.3px;width:9.5px;height:9px;background:#4772b3;border-radius:2px 0 0 2px"></div>
<svg class="a" style="left:715.5px;top:16.3px" width="10" height="9" viewBox="0 0 10 9"><path d="M1.5,8 Q2,2 8,1.5 M1.5,8 L3,6.5 M3.5,6 Q4.5,4 7,3.8" fill="none" stroke="#f4f4f4" stroke-width="0.9"/><circle cx="8" cy="1.6" r="1" fill="#fff"/></svg>
<div class="a" style="left:726.3px;top:16.3px;width:8.5px;height:9px;background:#282828;border-radius:0 2px 2px 0"></div>
<svg class="a" style="left:728px;top:19.3px" width="5" height="4" viewBox="0 0 5 4"><path d="M0.5,1 L2.5,3 L4.5,1" fill="none" stroke="#c8c8c8" stroke-width="0.8"/></svg>
<div class="a" style="left:739px;top:16.3px;width:9.5px;height:9px;background:#4772b3;border-radius:2px 0 0 2px"></div>
<svg class="a" style="left:739px;top:16.3px" width="10" height="9" viewBox="0 0 10 9"><circle cx="4" cy="5.5" r="2.6" fill="none" stroke="#f0f0f0" stroke-width="0.9"/><circle cx="6" cy="3.5" r="2.6" fill="#f4f4f4"/></svg>
<div class="a" style="left:749.8px;top:16.3px;width:8.5px;height:9px;background:#282828;border-radius:0 2px 2px 0"></div>
<svg class="a" style="left:751.5px;top:19.3px" width="5" height="4" viewBox="0 0 5 4"><path d="M0.5,1 L2.5,3 L4.5,1" fill="none" stroke="#c8c8c8" stroke-width="0.8"/></svg>
<div class="a" style="left:763px;top:16.3px;width:9.2px;height:9px;background:#2e2e2e;border-radius:2px"></div>
<svg class="a" style="left:763px;top:16.3px" width="10" height="9" viewBox="0 0 10 9"><rect x="2" y="3" width="5" height="4.5" fill="none" stroke="#666" stroke-width="0.8"/><path d="M3.5,3 L5,1.5 L8,1.5 L8,5.5 L7,7" fill="none" stroke="#666" stroke-width="0.8"/></svg>
<div class="a" style="left:775.7px;top:16.3px;width:39.6px;height:9px;background:#545454;border-radius:2px"></div>
<div class="a" style="left:785.6px;top:16.3px;width:9.9px;height:9px;background:#5e5e5e"></div>
<div class="a" style="left:795.5px;top:16.3px;width:9.9px;height:9px;background:#4772b3"></div>
<div class="a" style="left:805.4px;top:16.3px;width:9.9px;height:9px;background:#595959;border-radius:0 2px 2px 0"></div>
<svg class="a" style="left:775.7px;top:16.3px" width="40" height="9" viewBox="0 0 40 9"><g fill="none" stroke="#cfcfcf" stroke-width="0.7"><circle cx="5" cy="4.5" r="3"/><path d="M2,4.5 L8,4.5 M3,2.7 L7,2.7 M3,6.3 L7,6.3 M5,1.5 L5,7.5"/></g><circle cx="14.9" cy="4.5" r="3.1" fill="#d4d4d4"/><circle cx="24.8" cy="4.5" r="3.1" fill="#f2f2f2"/><path d="M24.8,1.4 A3.1,3.1 0 0 0 24.8,7.6 Z" fill="#4772b3"/><path d="M24.8,1.4 L24.8,4.5 L21.8,4.5" fill="#4772b3"/><circle cx="34.7" cy="4.5" r="3" fill="#8a8a8a" stroke="#cfcfcf" stroke-width="0.6"/><path d="M32.5,6.5 Q36,6 37,2.5" fill="none" stroke="#ddd" stroke-width="0.7"/></svg>
<div class="a" style="left:816.7px;top:16.3px;width:8px;height:9px;background:#282828;border-radius:2px"></div>
<svg class="a" style="left:818.3px;top:19.3px" width="5" height="4" viewBox="0 0 5 4"><path d="M0.5,1 L2.5,3 L4.5,1" fill="none" stroke="#c8c8c8" stroke-width="0.8"/></svg>
<!-- tool settings -->
<div class="t" style="left:4.7px;top:32.3px;color:#cfcfcf">Orientation:</div>
<div class="a" style="left:39.3px;top:30.5px;width:50.3px;height:9.8px;background:#2b2b2b;border-radius:2px"></div>
<svg class="a" style="left:40.5px;top:30.8px" width="9" height="9" viewBox="0 0 9 9"><circle cx="2.8" cy="1.2" r="0.7" fill="#cfcfcf"/><circle cx="2.8" cy="5.2" r="1.2" fill="#f2f2f2"/><circle cx="6.3" cy="5.4" r="0.7" fill="#cfcfcf"/><circle cx="1.2" cy="7.6" r="0.7" fill="#cfcfcf"/></svg>
<div class="t" style="left:51.5px;top:32.3px;color:#dedede">Default</div>
<svg class="a" style="left:84.5px;top:33.5px" width="5" height="4" viewBox="0 0 5 4"><path d="M0.5,1 L2.5,3 L4.5,1" fill="none" stroke="#c8c8c8" stroke-width="0.8"/></svg>
<div class="t" style="left:97px;top:32.3px;color:#cfcfcf">Drag:</div>
<div class="a" style="left:117.4px;top:30.5px;width:38.8px;height:9.8px;background:#2b2b2b;border-radius:2px"></div>
<div class="t" style="left:120.8px;top:32.3px;color:#dedede">Select Box</div>
<svg class="a" style="left:150.5px;top:33.5px" width="5" height="4" viewBox="0 0 5 4"><path d="M0.5,1 L2.5,3 L4.5,1" fill="none" stroke="#c8c8c8" stroke-width="0.8"/></svg>
<!-- overlay text -->
<div class="t" style="left:34.8px;top:48.5px;color:#f4f4f4;font-size:6.9px;-webkit-text-stroke:0.2px #f4f4f4">Right Orthographic</div>
<div class="t" style="left:34.8px;top:58.3px;color:#f4f4f4;font-size:6.9px;-webkit-text-stroke:0.2px #f4f4f4">(1) Collection | BézierCircle.001</div>
<div class="t" style="left:34.8px;top:68.5px;color:#f4f4f4;font-size:6.9px;-webkit-text-stroke:0.2px #f4f4f4">Meters</div>
<!-- options -->
<div class="a" style="left:793.2px;top:30.8px;width:33px;height:9px;background:#2a2a2a;border-radius:2px"></div>
<div class="t" style="left:796.5px;top:32.5px;color:#d8d8d8">Options</div>
<svg class="a" style="left:820px;top:33.8px" width="5" height="4" viewBox="0 0 5 4"><path d="M0.5,1 L2.5,3 L4.5,1" fill="none" stroke="#c8c8c8" stroke-width="0.8"/></svg>
<div class="a" style="left:824px;top:48px;width:7px;height:14px;background:#3a3a3a;border-radius:3px 0 0 3px"></div>
<svg class="a" style="left:825.5px;top:51.5px" width="5" height="7" viewBox="0 0 5 7"><path d="M3.5,0.8 L1.2,3.5 L3.5,6.2" fill="none" stroke="#a0a0a0" stroke-width="0.8"/></svg>
<!-- gizmo -->
<svg class="a" style="left:775px;top:44px" width="55" height="55" viewBox="775 44 55 55">
 <line x1="803.1" y1="70.2" x2="803.1" y2="52.7" stroke="#4a8fde" stroke-width="1.5"/>
 <line x1="803.1" y1="70.2" x2="803.1" y2="88.2" stroke="#3d72b0" stroke-width="1.5"/>
 <line x1="786.6" y1="70.2" x2="820" y2="70.2" stroke="#7ab52a" stroke-width="1.5"/>
 <circle cx="786.6" cy="70.2" r="4.3" fill="#4f6a2c" stroke="#7ab52a" stroke-width="0.9"/>
 <circle cx="803.1" cy="88.2" r="4.3" fill="#34506e" stroke="#3d76c4" stroke-width="0.9"/>
 <circle cx="803.1" cy="52.7" r="4.5" fill="#3d8ee6"/>
 <circle cx="820" cy="70.2" r="4.5" fill="#7dbf1c"/>
 <circle cx="803.1" cy="70.2" r="4.5" fill="#f0395a"/>
 <text x="803.1" y="55" font-family="Liberation Sans" font-weight="bold" font-size="6.2" fill="#1b2a3a" text-anchor="middle">Z</text>
 <text x="820" y="72.4" font-family="Liberation Sans" font-weight="bold" font-size="6.2" fill="#1e2e0c" text-anchor="middle">Y</text>
 <text x="803.1" y="72.4" font-family="Liberation Sans" font-weight="bold" font-size="6.2" fill="#3a0a10" text-anchor="middle">X</text>
</svg>
<!-- nav buttons -->
<svg class="a" style="left:808px;top:92px" width="20" height="68" viewBox="808 92 20 68">
 <circle cx="818.2" cy="101" r="6.6" fill="#2c2c2c"/>
 <circle cx="819.4" cy="99.7" r="2.8" fill="#e8e8e8"/><circle cx="819.6" cy="99.5" r="0.9" fill="#9a9a9a"/><line x1="817.5" y1="101.7" x2="814.6" y2="104.6" stroke="#e8e8e8" stroke-width="1.3" stroke-linecap="round"/>
 <circle cx="817.5" cy="117.7" r="6.6" fill="#2c2c2c"/>
 <path d="M815.2,119.5 L814.6,115.8 M816.6,118.5 L816.3,113.9 M818.1,118.5 L818.3,113.6 M819.5,119 L820,114.6" fill="none" stroke="#eeeeee" stroke-width="1.2" stroke-linecap="round"/>
 <path d="M814.8,117.5 L820.2,117.5 L821.6,116.5 Q822,117 821.2,118.5 L819.5,121.5 L815.8,121.5 Q814.8,120 814.8,117.5 Z" fill="#eeeeee"/>
 <circle cx="817.5" cy="134.4" r="6.6" fill="#2c2c2c"/>
 <circle cx="816" cy="132.5" r="1.6" fill="none" stroke="#e8e8e8" stroke-width="0.9"/><circle cx="818.9" cy="131.7" r="1.8" fill="none" stroke="#e8e8e8" stroke-width="0.9"/><circle cx="818.9" cy="131.7" r="0.6" fill="#e8e8e8"/><rect x="814.8" y="134.6" width="4.6" height="2.8" rx="0.8" fill="none" stroke="#e8e8e8" stroke-width="0.9"/><path d="M819.6,135.4 L821.4,134.4 L821.4,137.6 L819.6,136.6 Z" fill="#e8e8e8"/>
 <circle cx="818.2" cy="150.3" r="6.6" fill="#2c2c2c"/>
 <g stroke="#e8e8e8" stroke-width="0.75" fill="none"><rect x="814.7" y="146.8" width="7" height="7" rx="1"/><path d="M817.03,146.8 L817.03,153.8 M819.37,146.8 L819.37,153.8 M814.7,149.13 L821.7,149.13 M814.7,151.47 L821.7,151.47"/></g>
</svg>

<!-- TOOLBAR -->
<div class="a" style="left:5.1px;top:47.9px;width:20.4px;height:17.8px;background:#282828;border-radius:2px"></div>
<div class="a" style="left:5.1px;top:66.9px;width:20.4px;height:17.8px;background:#282828;border-radius:2px"></div>
<div class="a" style="left:5.3px;top:89.5px;width:20.2px;height:18.2px;background:#4772b3;border-radius:2px"></div>
<div class="a" style="left:5.3px;top:108.5px;width:20.2px;height:19.5px;background:#2a2a2a;border-radius:2px 2px 0 0"></div>
<div class="a" style="left:5.3px;top:128px;width:20.2px;height:19px;background:#2a2a2a"></div>
<div class="a" style="left:5.3px;top:147px;width:20.2px;height:19px;background:#2a2a2a;border-radius:0 0 2px 2px"></div>
<div class="a" style="left:5.3px;top:170.4px;width:20.2px;height:18px;background:#2a2a2a;border-radius:2px 2px 0 0"></div>
<div class="a" style="left:5.3px;top:188.4px;width:20.2px;height:18px;background:#2a2a2a;border-radius:0 0 2px 2px"></div>
<div class="a" style="left:5.3px;top:210.8px;width:20.2px;height:18.5px;background:#2a2a2a;border-radius:2px"></div>
<svg class="a" style="left:0;top:40px" width="30" height="195" viewBox="0 40 30 195">
 <!-- select box -->
 <rect x="8.6" y="50.6" width="12.4" height="12.4" rx="2" fill="none" stroke="#c8963c" stroke-width="1" stroke-dasharray="1.1 1.1"/>
 <path d="M12.8,53.2 L12.8,60.6 L14.6,58.9 L16,61.6 L17.2,61 L15.9,58.4 L18.3,58.2 Z" fill="#f4f4f4"/>
 <path d="M24.6,63.6 L24.6,65.1 L23.1,65.1 Z" fill="#999"/>
 <!-- cursor -->
 <circle cx="14.8" cy="75.7" r="5.6" fill="none" stroke="#e8e8e8" stroke-width="1.1"/>
 <circle cx="14.8" cy="75.7" r="5.6" fill="none" stroke="#c03030" stroke-width="1.1" stroke-dasharray="1.6 1.9"/>
 <path d="M14.8,72 L14.8,74 M14.8,77.4 L14.8,79.4 M11.1,75.7 L13.1,75.7 M16.5,75.7 L18.5,75.7" stroke="#bdbdbd" stroke-width="0.8"/>
 <!-- move -->
 <path d="M14.6,93.5 L14.6,96.6 M14.6,99.8 L14.6,103 M9.5,98.2 L12.8,98.2 M16.4,98.2 L19.7,98.2" stroke="#f4f4f4" stroke-width="0.9"/>
 <path d="M13.1,94 L14.6,92 L16.1,94 Z M13.1,102.5 L14.6,104.5 L16.1,102.5 Z M10,96.7 L8,98.2 L10,99.7 Z M19.2,96.7 L21.2,98.2 L19.2,99.7 Z" fill="#f4f4f4"/>
 <circle cx="14.6" cy="98.2" r="0.8" fill="#f4f4f4"/>
 <!-- rotate -->
 <path d="M11,116 A4.8,4.8 0 0 1 19.8,116 M19.8,121 A4.8,4.8 0 0 1 11,121" fill="none" stroke="#e8e8e8" stroke-width="1"/>
 <path d="M19,114.5 L21,117 L18.5,117.5 Z M11.8,122.5 L9.8,120 L12.3,119.5 Z" fill="#e8e8e8"/>
 <circle cx="15.4" cy="118.5" r="1.4" fill="#f0f0f0"/>
 <!-- scale -->
 <rect x="10.5" y="132.5" width="9.5" height="9.5" fill="none" stroke="#e0e0e0" stroke-width="0.9"/>
 <rect x="10.5" y="137" width="5" height="5" fill="#f0f0f0"/>
 <path d="M15.5,137 L19.5,133 M17.5,133 L19.7,133 L19.7,135.2" fill="none" stroke="#f0f0f0" stroke-width="0.9"/>
 <path d="M24.5,144.5 L24.5,146 L23,146 Z" fill="#aaa"/>
 <!-- transform -->
 <circle cx="15.4" cy="157" r="5.3" fill="none" stroke="#d8d8d8" stroke-width="0.8" stroke-dasharray="1.5 1.2"/>
 <rect x="12.4" y="154" width="6" height="6" fill="#f0f0f0"/>
 <path d="M15.4,154 L15.4,160 M12.4,157 L18.4,157" stroke="#2a2a2a" stroke-width="0.6"/>
 <!-- annotate -->
 <path d="M10,184 L17.5,176.5 L19.5,178.5 L12,186 L9.8,186.3 Z" fill="none" stroke="#e8e8e8" stroke-width="1"/>
 <path d="M13,186.5 Q16,183.5 18,185 Q20,186.5 21.5,184.5" fill="none" stroke="#5fbf8f" stroke-width="0.9"/>
 <path d="M24.5,186.5 L24.5,188 L23,188 Z" fill="#aaa"/>
 <!-- measure -->
 <path d="M11,191.5 L11,203.5 L21,203.5" fill="none" stroke="#e8e8e8" stroke-width="1.1"/>
 <path d="M12,196.5 A6.5,6.5 0 0 1 18.5,202.5 L12,202.5 Z" fill="#5fbf8f"/>
 <!-- add cube -->
 <path d="M12,216 L18,216 L21,213.5 L21,222.5 L18,225.5 L12,225.5 Z M18,216 L18,225.5 M12,216 L15,213.5 L21,213.5" fill="none" stroke="#5fbf8f" stroke-width="0.9"/>
 <path d="M10,212 L10,216 M8,214 L12,214" stroke="#5fbf8f" stroke-width="0.9"/>
 <path d="M24.5,227 L24.5,228.5 L23,228.5 Z" fill="#aaa"/>
</svg>

<!-- OUTLINER -->
<div class="a" style="left:837px;top:15.5px;width:15px;height:10.5px;background:#2c2c2c;border-radius:2px"></div>
<svg class="a" style="left:838px;top:16px" width="14" height="10" viewBox="0 0 14 10"><rect x="1.5" y="1" width="3" height="1.6" fill="#e8e8e8"/><rect x="4.5" y="4" width="4" height="1.8" fill="#e8e8e8"/><rect x="4.5" y="7" width="4" height="1.8" fill="#e8e8e8"/><path d="M2.5,2.6 L2.5,8 L4.5,8 M2.5,5 L4.5,5" fill="none" stroke="#cfcfcf" stroke-width="0.6"/><path d="M10,4.3 L11.2,5.5 L12.4,4.3" fill="none" stroke="#c8c8c8" stroke-width="0.8"/></svg>
<div class="a" style="left:855.3px;top:15.5px;width:16px;height:10.5px;background:#2c2c2c;border-radius:2px"></div>
<svg class="a" style="left:856.5px;top:16px" width="15" height="10" viewBox="0 0 15 10"><rect x="1" y="2" width="7" height="7" fill="#8c8c8c"/><path d="M3,8 L5.5,3 L8,8 Z" fill="#f0f0f0"/><path d="M10.5,4.3 L11.7,5.5 L12.9,4.3" fill="none" stroke="#c8c8c8" stroke-width="0.8"/></svg>
<div class="a" style="left:882px;top:15.8px;width:60px;height:9.8px;background:#1f1f1f;border-radius:3px"></div>
<svg class="a" style="left:883.5px;top:16.3px" width="9" height="9" viewBox="0 0 9 9"><circle cx="5" cy="3.6" r="2.6" fill="none" stroke="#dcdcdc" stroke-width="0.9"/><path d="M3.2,5.4 L0.8,7.9" stroke="#dcdcdc" stroke-width="1"/></svg>
<div class="t" style="left:893.5px;top:17.8px;color:#6a6a6a">Search</div>
<svg class="a" style="left:971.4px;top:16px" width="16" height="10" viewBox="0 0 16 10"><path d="M1,1.2 L8,1.2 L5.4,4.5 L5.4,8.5 L3.6,7.5 L3.6,4.5 Z" fill="none" stroke="#dcdcdc" stroke-width="0.8"/><path d="M10.5,4.3 L11.7,5.5 L12.9,4.3" fill="none" stroke="#c8c8c8" stroke-width="0.8"/></svg>
<div class="a" style="left:991px;top:15.5px;width:10.5px;height:10.5px;background:#4a4a4a;border-radius:2px"></div>
<svg class="a" style="left:991px;top:15.5px" width="11" height="11" viewBox="0 0 11 11"><rect x="2" y="3" width="5.5" height="6" fill="none" stroke="#c8c8c8" stroke-width="0.7"/><rect x="5.6" y="1" width="4" height="4" rx="1.5" fill="#c8c8c8"/></svg>
<div class="a" style="left:846.2px;top:29px;width:0.8px;height:80px;background:#4a4a4a"></div>
<div class="a" style="left:847px;top:29.1px;width:158px;height:11.08px;background:#2b2b2b"></div>
<svg class="a" style="left:855.5px;top:31.1px" width="5" height="7" viewBox="0 0 5 7"><path d="M1.2,0.8 L3.8,3.5 L1.2,6.2" fill="none" stroke="#a8a8a8" stroke-width="0.8"/></svg>
<svg class="a" style="left:863px;top:29.6px" width="10" height="10" viewBox="0 0 10 10"><path d="M2.5,2 Q7.5,1.2 7.5,5 Q7.5,8.8 2.5,8" fill="none" stroke="#e8923c" stroke-width="1.3" stroke-linecap="round"/></svg>
<div class="t" style="left:874.8px;top:31.6px;color:#dadada">BézierCircle</div>
<svg class="a" style="left:918.8px;top:30.1px" width="9" height="9" viewBox="0 0 9 9"><path d="M8.2,2.9 A2.2,2.2 0 1 1 6.1,0.8" fill="none" stroke="#6a8ad0" stroke-width="1.3"/><path d="M4.5,4.5 L1.6,7.5" stroke="#6a8ad0" stroke-width="1.6" stroke-linecap="round"/></svg>
<svg class="a" style="left:929.3px;top:30.1px" width="9" height="9" viewBox="0 0 9 9"><path d="M3,1.5 Q7.5,1 7.5,4.8 Q7.5,8.3 2.5,7.8" fill="none" stroke="#2aa580" stroke-width="1"/><circle cx="3" cy="1.6" r="0.9" fill="#2aa580"/><circle cx="2.5" cy="7.7" r="0.9" fill="#2aa580"/></svg>
<svg class="a" style="left:978.5px;top:30.6px" width="10" height="8" viewBox="0 0 10 8"><path d="M1,4 Q5,-0.5 9,4 Q5,8.5 1,4 Z" fill="none" stroke="#e0e0e0" stroke-width="0.9"/><circle cx="5" cy="4" r="1.4" fill="#e0e0e0"/></svg>
<svg class="a" style="left:989.8px;top:30.1px" width="9" height="9" viewBox="0 0 9 9"><path d="M1,3 L2.8,3 L3.5,1.6 L5.5,1.6 L6.2,3 L8,3 L8,7.6 L1,7.6 Z" fill="#e0e0e0"/><circle cx="4.5" cy="5.2" r="1.4" fill="#555"/></svg>
<div class="a" style="left:847px;top:40.2px;width:158px;height:11.08px;background:#282828"></div>
<svg class="a" style="left:855.5px;top:42.2px" width="5" height="7" viewBox="0 0 5 7"><path d="M1.2,0.8 L3.8,3.5 L1.2,6.2" fill="none" stroke="#a8a8a8" stroke-width="0.8"/></svg>
<div class="a" style="left:862.5px;top:40.7px;width:10.5px;height:10px;background:#4e4e4e;border-radius:2px"></div>
<svg class="a" style="left:863px;top:40.7px" width="10" height="10" viewBox="0 0 10 10"><path d="M2.5,2 Q7.5,1.2 7.5,5 Q7.5,8.8 2.5,8" fill="none" stroke="#e8923c" stroke-width="1.3" stroke-linecap="round"/></svg>
<div class="t" style="left:874.8px;top:42.7px;color:#dadada">BézierCircle.001</div>
<svg class="a" style="left:931.1px;top:41.2px" width="9" height="9" viewBox="0 0 9 9"><path d="M8.2,2.9 A2.2,2.2 0 1 1 6.1,0.8" fill="none" stroke="#6a8ad0" stroke-width="1.3"/><path d="M4.5,4.5 L1.6,7.5" stroke="#6a8ad0" stroke-width="1.6" stroke-linecap="round"/></svg>
<svg class="a" style="left:941.4px;top:41.2px" width="9" height="9" viewBox="0 0 9 9"><path d="M3,1.5 Q7.5,1 7.5,4.8 Q7.5,8.3 2.5,7.8" fill="none" stroke="#2aa580" stroke-width="1"/><circle cx="3" cy="1.6" r="0.9" fill="#2aa580"/><circle cx="2.5" cy="7.7" r="0.9" fill="#2aa580"/></svg>
<svg class="a" style="left:978.5px;top:41.7px" width="10" height="8" viewBox="0 0 10 8"><path d="M1,4 Q5,-0.5 9,4 Q5,8.5 1,4 Z" fill="none" stroke="#e0e0e0" stroke-width="0.9"/><circle cx="5" cy="4" r="1.4" fill="#e0e0e0"/></svg>
<svg class="a" style="left:989.8px;top:41.2px" width="9" height="9" viewBox="0 0 9 9"><path d="M1,3 L2.8,3 L3.5,1.6 L5.5,1.6 L6.2,3 L8,3 L8,7.6 L1,7.6 Z" fill="#e0e0e0"/><circle cx="4.5" cy="5.2" r="1.4" fill="#555"/></svg>
<div class="a" style="left:847px;top:51.3px;width:158px;height:11.08px;background:#2b2b2b"></div>
<svg class="a" style="left:855.5px;top:53.3px" width="5" height="7" viewBox="0 0 5 7"><path d="M1.2,0.8 L3.8,3.5 L1.2,6.2" fill="none" stroke="#a8a8a8" stroke-width="0.8"/></svg>
<svg class="a" style="left:863px;top:51.8px" width="10" height="10" viewBox="0 0 10 10"><path d="M1.5,1.8 L8.5,1.8 L5,8.8 Z" fill="none" stroke="#e8923c" stroke-width="1.3" stroke-linejoin="round"/></svg>
<div class="t" style="left:874.8px;top:53.8px;color:#dadada">Cube</div>
<svg class="a" style="left:900.5px;top:52.3px" width="9" height="9" viewBox="0 0 9 9"><path d="M1.5,1.8 L7.5,1.8 L4.5,7.8 Z" fill="none" stroke="#2aa580" stroke-width="1"/><circle cx="1.6" cy="1.8" r="0.9" fill="#2aa580"/><circle cx="7.4" cy="1.8" r="0.9" fill="#2aa580"/><circle cx="4.5" cy="7.6" r="0.9" fill="#2aa580"/></svg>
<svg class="a" style="left:978.5px;top:52.8px" width="10" height="8" viewBox="0 0 10 8"><path d="M1,4 Q5,-0.5 9,4 Q5,8.5 1,4 Z" fill="none" stroke="#e0e0e0" stroke-width="0.9"/><circle cx="5" cy="4" r="1.4" fill="#e0e0e0"/></svg>
<svg class="a" style="left:989.8px;top:52.3px" width="9" height="9" viewBox="0 0 9 9"><path d="M1,3 L2.8,3 L3.5,1.6 L5.5,1.6 L6.2,3 L8,3 L8,7.6 L1,7.6 Z" fill="#e0e0e0"/><circle cx="4.5" cy="5.2" r="1.4" fill="#555"/></svg>
<div class="a" style="left:847px;top:62.3px;width:158px;height:11.08px;background:#282828"></div>
<svg class="a" style="left:855.5px;top:64.3px" width="5" height="7" viewBox="0 0 5 7"><path d="M1.2,0.8 L3.8,3.5 L1.2,6.2" fill="none" stroke="#a8a8a8" stroke-width="0.8"/></svg>
<svg class="a" style="left:863px;top:62.8px" width="10" height="10" viewBox="0 0 10 10"><path d="M2.5,2 Q7.5,1.2 7.5,5 Q7.5,8.8 2.5,8" fill="none" stroke="#e8923c" stroke-width="1.3" stroke-linecap="round"/></svg>
<div class="t" style="left:874.8px;top:64.8px;color:#dadada">Cube.001</div>
<svg class="a" style="left:912.8px;top:63.3px" width="9" height="9" viewBox="0 0 9 9"><path d="M8.2,2.9 A2.2,2.2 0 1 1 6.1,0.8" fill="none" stroke="#6a8ad0" stroke-width="1.3"/><path d="M4.5,4.5 L1.6,7.5" stroke="#6a8ad0" stroke-width="1.6" stroke-linecap="round"/></svg>
<svg class="a" style="left:923.3px;top:63.3px" width="9" height="9" viewBox="0 0 9 9"><path d="M3,1.5 Q7.5,1 7.5,4.8 Q7.5,8.3 2.5,7.8" fill="none" stroke="#2aa580" stroke-width="1"/><circle cx="3" cy="1.6" r="0.9" fill="#2aa580"/><circle cx="2.5" cy="7.7" r="0.9" fill="#2aa580"/></svg>
<svg class="a" style="left:978.5px;top:63.8px" width="10" height="8" viewBox="0 0 10 8"><path d="M1,4 Q5,-0.5 9,4 Q5,8.5 1,4 Z" fill="none" stroke="#e0e0e0" stroke-width="0.9"/><circle cx="5" cy="4" r="1.4" fill="#e0e0e0"/></svg>
<svg class="a" style="left:989.8px;top:63.3px" width="9" height="9" viewBox="0 0 9 9"><path d="M1,3 L2.8,3 L3.5,1.6 L5.5,1.6 L6.2,3 L8,3 L8,7.6 L1,7.6 Z" fill="#e0e0e0"/><circle cx="4.5" cy="5.2" r="1.4" fill="#555"/></svg>
<div class="a" style="left:847px;top:73.4px;width:158px;height:11.08px;background:#2b2b2b"></div>
<svg class="a" style="left:855.5px;top:75.4px" width="5" height="7" viewBox="0 0 5 7"><path d="M1.2,0.8 L3.8,3.5 L1.2,6.2" fill="none" stroke="#a8a8a8" stroke-width="0.8"/></svg>
<svg class="a" style="left:863px;top:73.9px" width="10" height="10" viewBox="0 0 10 10"><path d="M2.5,2 Q7.5,1.2 7.5,5 Q7.5,8.8 2.5,8" fill="none" stroke="#e8923c" stroke-width="1.3" stroke-linecap="round"/></svg>
<div class="t" style="left:874.8px;top:75.9px;color:#dadada">Cube.002</div>
<svg class="a" style="left:912.8px;top:74.4px" width="9" height="9" viewBox="0 0 9 9"><path d="M8.2,2.9 A2.2,2.2 0 1 1 6.1,0.8" fill="none" stroke="#6a8ad0" stroke-width="1.3"/><path d="M4.5,4.5 L1.6,7.5" stroke="#6a8ad0" stroke-width="1.6" stroke-linecap="round"/></svg>
<svg class="a" style="left:923.3px;top:74.4px" width="9" height="9" viewBox="0 0 9 9"><path d="M3,1.5 Q7.5,1 7.5,4.8 Q7.5,8.3 2.5,7.8" fill="none" stroke="#2aa580" stroke-width="1"/><circle cx="3" cy="1.6" r="0.9" fill="#2aa580"/><circle cx="2.5" cy="7.7" r="0.9" fill="#2aa580"/></svg>
<svg class="a" style="left:978.5px;top:74.9px" width="10" height="8" viewBox="0 0 10 8"><path d="M1,4 Q5,-0.5 9,4 Q5,8.5 1,4 Z" fill="none" stroke="#e0e0e0" stroke-width="0.9"/><circle cx="5" cy="4" r="1.4" fill="#e0e0e0"/></svg>
<svg class="a" style="left:989.8px;top:74.4px" width="9" height="9" viewBox="0 0 9 9"><path d="M1,3 L2.8,3 L3.5,1.6 L5.5,1.6 L6.2,3 L8,3 L8,7.6 L1,7.6 Z" fill="#e0e0e0"/><circle cx="4.5" cy="5.2" r="1.4" fill="#555"/></svg>
<div class="a" style="left:847px;top:84.5px;width:158px;height:11.08px;background:#282828"></div>
<svg class="a" style="left:855.5px;top:86.5px" width="5" height="7" viewBox="0 0 5 7"><path d="M1.2,0.8 L3.8,3.5 L1.2,6.2" fill="none" stroke="#a8a8a8" stroke-width="0.8"/></svg>
<svg class="a" style="left:863px;top:85.0px" width="10" height="10" viewBox="0 0 10 10"><path d="M2.5,2 Q7.5,1.2 7.5,5 Q7.5,8.8 2.5,8" fill="none" stroke="#e8923c" stroke-width="1.3" stroke-linecap="round"/></svg>
<div class="t" style="left:874.8px;top:87.0px;color:#dadada">Cylinder.001</div>
<svg class="a" style="left:921.1px;top:85.5px" width="9" height="9" viewBox="0 0 9 9"><path d="M8.2,2.9 A2.2,2.2 0 1 1 6.1,0.8" fill="none" stroke="#6a8ad0" stroke-width="1.3"/><path d="M4.5,4.5 L1.6,7.5" stroke="#6a8ad0" stroke-width="1.6" stroke-linecap="round"/></svg>
<svg class="a" style="left:931.6px;top:85.5px" width="9" height="9" viewBox="0 0 9 9"><path d="M3,1.5 Q7.5,1 7.5,4.8 Q7.5,8.3 2.5,7.8" fill="none" stroke="#2aa580" stroke-width="1"/><circle cx="3" cy="1.6" r="0.9" fill="#2aa580"/><circle cx="2.5" cy="7.7" r="0.9" fill="#2aa580"/></svg>
<svg class="a" style="left:978.5px;top:86.0px" width="10" height="8" viewBox="0 0 10 8"><path d="M1,4 Q5,-0.5 9,4 Q5,8.5 1,4 Z" fill="none" stroke="#e0e0e0" stroke-width="0.9"/><circle cx="5" cy="4" r="1.4" fill="#e0e0e0"/></svg>
<svg class="a" style="left:989.8px;top:85.5px" width="9" height="9" viewBox="0 0 9 9"><path d="M1,3 L2.8,3 L3.5,1.6 L5.5,1.6 L6.2,3 L8,3 L8,7.6 L1,7.6 Z" fill="#e0e0e0"/><circle cx="4.5" cy="5.2" r="1.4" fill="#555"/></svg>
<div class="a" style="left:847px;top:95.6px;width:158px;height:11.08px;background:#2b2b2b"></div>
<svg class="a" style="left:855.5px;top:97.6px" width="5" height="7" viewBox="0 0 5 7"><path d="M1.2,0.8 L3.8,3.5 L1.2,6.2" fill="none" stroke="#a8a8a8" stroke-width="0.8"/></svg>
<svg class="a" style="left:863px;top:96.1px" width="10" height="10" viewBox="0 0 10 10"><path d="M1.5,1.8 L8.5,1.8 L5,8.8 Z" fill="none" stroke="#e8923c" stroke-width="1.3" stroke-linejoin="round"/></svg>
<div class="t" style="left:874.8px;top:98.1px;color:#dadada">fence post.002</div>
<svg class="a" style="left:927.4px;top:96.6px" width="9" height="9" viewBox="0 0 9 9"><path d="M8.2,2.9 A2.2,2.2 0 1 1 6.1,0.8" fill="none" stroke="#6a8ad0" stroke-width="1.3"/><path d="M4.5,4.5 L1.6,7.5" stroke="#6a8ad0" stroke-width="1.6" stroke-linecap="round"/></svg>
<svg class="a" style="left:938.4px;top:96.6px" width="9" height="9" viewBox="0 0 9 9"><path d="M1.5,1.8 L7.5,1.8 L4.5,7.8 Z" fill="none" stroke="#2aa580" stroke-width="1"/><circle cx="1.6" cy="1.8" r="0.9" fill="#2aa580"/><circle cx="7.4" cy="1.8" r="0.9" fill="#2aa580"/><circle cx="4.5" cy="7.6" r="0.9" fill="#2aa580"/></svg>
<svg class="a" style="left:978.5px;top:97.1px" width="10" height="8" viewBox="0 0 10 8"><path d="M1,4 Q5,-0.5 9,4 Q5,8.5 1,4 Z" fill="none" stroke="#e0e0e0" stroke-width="0.9"/><circle cx="5" cy="4" r="1.4" fill="#e0e0e0"/></svg>
<svg class="a" style="left:989.8px;top:96.6px" width="9" height="9" viewBox="0 0 9 9"><path d="M1,3 L2.8,3 L3.5,1.6 L5.5,1.6 L6.2,3 L8,3 L8,7.6 L1,7.6 Z" fill="#e0e0e0"/><circle cx="4.5" cy="5.2" r="1.4" fill="#555"/></svg>
<div class="a" style="left:847px;top:106.1px;width:158px;height:3px;background:#2b2b2b"></div>
<div class="a" style="left:864px;top:107.3px;width:6px;height:1.2px;background:#c07030"></div><div class="a" style="left:915.5px;top:107.4px;width:2px;height:1.2px;background:#2a9a70"></div><div class="a" style="left:920px;top:107.4px;width:2px;height:1.2px;background:#2a9a70"></div>
<div class="a" style="left:1002.5px;top:40px;width:1px;height:25px;background:#555"></div>
<!-- PROPS -->
<div class="a" style="left:831px;top:124px;width:14.8px;height:429px;background:#1e1e1e"></div>
<div class="a" style="left:836.5px;top:112.8px;width:14px;height:9.8px;background:#2a2a2a;border-radius:2px"></div>
<svg class="a" style="left:837px;top:113px" width="14" height="10" viewBox="0 0 14 10"><rect x="1" y="1" width="7" height="3.5" rx="1.7" fill="#e0e0e0"/><rect x="1" y="5.5" width="7" height="3.5" rx="1.7" fill="#e0e0e0"/><circle cx="6" cy="2.7" r="1.2" fill="#2a2a2a"/><circle cx="3" cy="7.2" r="1.2" fill="#2a2a2a"/><path d="M10,4.3 L11.2,5.5 L12.4,4.3" fill="none" stroke="#c8c8c8" stroke-width="0.8"/></svg>
<div class="a" style="left:889.5px;top:112.4px;width:57.5px;height:9.3px;background:#1f1f1f;border-radius:3px"></div>
<svg class="a" style="left:890.8px;top:112.7px" width="9" height="9" viewBox="0 0 9 9"><circle cx="5" cy="3.6" r="2.6" fill="none" stroke="#dcdcdc" stroke-width="0.9"/><path d="M3.2,5.4 L0.8,7.9" stroke="#dcdcdc" stroke-width="1"/></svg>
<div class="t" style="left:900.8px;top:114px;color:#6a6a6a">Search</div>
<div class="a" style="left:991px;top:112.5px;width:9.5px;height:9.5px;background:#262626;border-radius:2px"></div>
<svg class="a" style="left:993.3px;top:115.8px" width="5" height="4" viewBox="0 0 5 4"><path d="M0.5,1 L2.5,3 L4.5,1" fill="none" stroke="#c8c8c8" stroke-width="0.8"/></svg>
<div class="a" style="left:832px;top:266.5px;width:14px;height:15px;background:#2e2e2e;border-radius:3px 0 0 3px"></div>
<svg class="a" style="left:831px;top:124px" width="15" height="240" viewBox="831 124 15 240">
 <g stroke="#dcdcdc" stroke-width="1" fill="none"><path d="M836,131 L836,136 M841.5,131 L841.5,141 M839.5,131 Q839.5,134 841.5,134 Q843.5,134 843.5,131"/></g><rect x="835" y="137" width="2" height="4" fill="#dcdcdc"/>
 <g stroke="#dcdcdc" stroke-width="0.9" fill="none"><rect x="834.8" y="152.8" width="8" height="6.2"/><path d="M836.5,152.8 L837.5,150.8 L840,150.8 L841,152.8"/></g>
 <g stroke="#dcdcdc" stroke-width="0.9" fill="none"><rect x="834.8" y="167.5" width="8" height="3"/><path d="M836,170.5 L836,175 L841.5,175 L841.5,170.5"/></g><rect x="834.8" y="167.5" width="8" height="3" fill="#dcdcdc"/>
 <rect x="835.5" y="183.5" width="6.5" height="6.5" fill="#777"/><path d="M836.5,189 L838.8,184.5 L841,189 Z" fill="#e8e8e8"/>
 <path d="M836,200 L835,205.5 Q835,207 837,207 Q839,207 838.5,205 Z" fill="#d8d8d8"/><circle cx="840.5" cy="205" r="1.8" fill="none" stroke="#d8d8d8" stroke-width="0.8"/><circle cx="840.8" cy="201" r="0.8" fill="#d8d8d8"/>
 <circle cx="838.8" cy="218.5" r="3.6" fill="none" stroke="#c0484e" stroke-width="1"/><path d="M836,216.5 Q838.5,218 837.8,221 M840.5,215.5 Q839.5,218 841.8,219.8" fill="none" stroke="#c0484e" stroke-width="0.8"/>
 <g stroke="#dcdcdc" stroke-width="0.9" fill="none"><rect x="835" y="235.5" width="7.6" height="7"/><path d="M835,237.5 L842.6,237.5"/></g><rect x="837.5" y="239" width="2.6" height="1.8" fill="#dcdcdc"/>
 <rect x="836.2" y="256.3" width="5.4" height="5.6" fill="#e8a060"/><path d="M834.6,256.3 L834.6,254.6 L836.3,254.6 M841.5,254.6 L843.2,254.6 L843.2,256.3 M843.2,262 L843.2,263.7 L841.5,263.7 M836.3,263.7 L834.6,263.7 L834.6,262" fill="none" stroke="#d08040" stroke-width="0.9"/>
 <path d="M843.4,273.2 A2.6,2.6 0 1 1 840.9,270.6" fill="none" stroke="#7aa0e8" stroke-width="1.5"/><path d="M839.2,275.6 L835.6,279.2" stroke="#7aa0e8" stroke-width="1.9" stroke-linecap="round"/>
 <circle cx="838.8" cy="290" r="3.5" fill="none" stroke="#5f82c8" stroke-width="0.9"/><circle cx="838.8" cy="290" r="1.3" fill="#5f82c8"/><circle cx="842" cy="287" r="0.9" fill="#5f82c8"/>
 <circle cx="838" cy="306.5" r="2.6" fill="none" stroke="#5f82c8" stroke-width="1"/><circle cx="840" cy="304.7" r="2.6" fill="#5f82c8"/>
 <path d="M836.5,317.5 Q841.8,316.8 841.8,320.8 Q841.8,324.8 836.5,324.2" fill="none" stroke="#2aa580" stroke-width="1.1"/><circle cx="836.5" cy="317.6" r="1" fill="#2aa580"/><circle cx="836.5" cy="324.2" r="1" fill="#2aa580"/>
 <circle cx="838.8" cy="337.2" r="3.6" fill="#c8484e"/><path d="M838.8,333.6 A3.6,3.6 0 0 1 842.4,337.2 L838.8,337.2 Z" fill="#f0d0d0"/><path d="M835.2,337.2 A3.6,3.6 0 0 0 838.8,340.8 L838.8,337.2 Z" fill="#f0d0d0"/>
 <g fill="#c8484e"><rect x="835" y="353" width="2" height="2"/><rect x="839" y="353" width="2" height="2"/><rect x="837" y="355" width="2" height="2"/><rect x="841" y="355" width="2" height="2"/><rect x="835" y="357" width="2" height="2"/><rect x="839" y="357" width="2" height="2"/><rect x="837" y="359" width="2" height="2"/><rect x="841" y="359" width="2" height="2"/></g>
</svg>
<svg class="a" style="left:850px;top:129.5px" width="10" height="10" viewBox="0 0 10 10"><rect x="2.8" y="2.8" width="4.4" height="4.4" fill="#e8e8e8"/><path d="M1,3 L1,1 L3,1 M7,1 L9,1 L9,3 M9,7 L9,9 L7,9 M3,9 L1,9 L1,7" fill="none" stroke="#bcbcbc" stroke-width="0.7"/></svg>
<div class="t" style="left:863.7px;top:131.5px;color:#d8d8d8">BézierCircle.001</div>
<svg class="a" style="left:914.5px;top:131px" width="5" height="7" viewBox="0 0 5 7"><path d="M1.2,0.8 L3.8,3.5 L1.2,6.2" fill="none" stroke="#c0c0c0" stroke-width="0.8"/></svg>
<svg class="a" style="left:921.5px;top:129.5px" width="10" height="10" viewBox="0 0 10 10"><circle cx="2" cy="2" r="1" fill="#e0e0e0"/><circle cx="4.5" cy="3" r="1.2" fill="#e0e0e0"/><circle cx="2.5" cy="5" r="1" fill="#e0e0e0"/><circle cx="6.5" cy="6.5" r="2.6" fill="#e0e0e0"/><circle cx="6.5" cy="6.5" r="0.9" fill="#2e2e2e"/></svg>
<div class="t" style="left:935px;top:131.5px;color:#d8d8d8">GeometryNodes</div>
<svg class="a" style="left:990.5px;top:129.5px" width="10" height="10" viewBox="0 0 10 10"><path d="M1,9 L3.8,6.2 M3.2,3.5 L6.5,6.8 M5,1.8 L8.2,5 L6.5,6.8 L3.2,3.5 Z" fill="none" stroke="#9a9a9a" stroke-width="0.9"/></svg>
<div class="a" style="left:850.3px;top:149.2px;width:150.2px;height:10.6px;background:#3f3f3f;border-radius:2.5px"></div>
<div class="t" style="left:854.5px;top:150.8px;color:#d0d0d0;font-size:8.5px">+</div>
<div class="t" style="left:913.8px;top:151.5px;color:#d8d8d8">Add Modifier</div>
<div class="a" style="left:850.2px;top:165.3px;width:150.8px;height:322.7px;background:#333333;border:1px solid #46689e;border-radius:3px"></div>
<svg class="a" style="left:853.5px;top:169px" width="6" height="6" viewBox="0 0 6 6"><path d="M0.8,1.8 L3,4 L5.2,1.8" fill="none" stroke="#c8c8c8" stroke-width="0.8"/></svg>
<svg class="a" style="left:861px;top:167.5px" width="10" height="10" viewBox="0 0 10 10"><circle cx="2" cy="2" r="1" fill="#e0e0e0"/><circle cx="4.5" cy="3" r="1.2" fill="#e0e0e0"/><circle cx="2.5" cy="5" r="1" fill="#e0e0e0"/><circle cx="6.5" cy="6.5" r="2.6" fill="#e0e0e0"/><circle cx="6.5" cy="6.5" r="0.9" fill="#333"/></svg>
<div class="a" style="left:876px;top:168px;width:56.5px;height:9.5px;background:#1e1e1e;border-radius:2px 0 0 2px"></div>
<div class="t" style="left:878.8px;top:169.8px;color:#dcdcdc">GeometryNodes</div>
<div class="a" style="left:932.7px;top:168px;width:31.1px;height:9.5px;background:#4772b3;border-radius:0 2px 2px 0"></div>
<svg class="a" style="left:932.7px;top:168px" width="32" height="10" viewBox="0 0 32 10"><g fill="none" stroke="#f0f0f0" stroke-width="0.8"><rect x="2.5" y="2" width="6" height="6" stroke-dasharray="1.4 0.8"/><rect x="13" y="2.2" width="6.5" height="4.6"/><path d="M14.5,8 L18,8"/><path d="M23.5,3.3 L25,3.3 L25.8,2 L27.5,2 L28.3,3.3 L30,3.3 L30,7.8 L23.5,7.8 Z"/></g><circle cx="26.8" cy="5.5" r="1.2" fill="#f0f0f0"/><line x1="10.4" y1="0" x2="10.4" y2="10" stroke="#3a5f96" stroke-width="0.6"/><line x1="20.8" y1="0" x2="20.8" y2="10" stroke="#3a5f96" stroke-width="0.6"/></svg>
<div class="a" style="left:964.5px;top:168px;width:9px;height:9.5px;background:#1e1e1e;border-radius:2px"></div>
<svg class="a" style="left:966.3px;top:171px" width="6" height="5" viewBox="0 0 6 5"><path d="M0.8,1 L3,3.2 L5.2,1" fill="none" stroke="#c8c8c8" stroke-width="0.8"/></svg>
<svg class="a" style="left:976.8px;top:169.8px" width="6" height="6" viewBox="0 0 6 6"><path d="M0.5,0.5 L5.5,5.5 M5.5,0.5 L0.5,5.5" stroke="#d0d0d0" stroke-width="0.9"/></svg>
<div class="a" style="left:989.5px;top:170.5px;width:8px;height:4px;background:#3a3a3a"></div>
<div class="a" style="left:854.9px;top:184.8px;width:15.5px;height:9.5px;background:#2a2a2a;border-radius:2px"></div>
<svg class="a" style="left:855.5px;top:185px" width="15" height="10" viewBox="0 0 15 10"><rect x="1" y="1" width="6" height="3.6" rx="1" fill="#e0e0e0"/><rect x="1" y="5.4" width="6" height="3.6" rx="1" fill="#e0e0e0"/><path d="M7,2.5 Q9,2.5 9,5 Q9,7.5 7,7.5" fill="none" stroke="#e0e0e0" stroke-width="0.7"/><path d="M10.5,4.3 L11.7,5.5 L12.9,4.3" fill="none" stroke="#c8c8c8" stroke-width="0.8"/></svg>
<div class="a" style="left:872.2px;top:184.8px;width:77.1px;height:9.5px;background:#1e1e1e;border-radius:2px 0 0 2px"></div>
<div class="t" style="left:874.8px;top:186.7px;color:#dcdcdc">Stone Path</div>
<div class="a" style="left:949.3px;top:184.8px;width:15px;height:9.5px;background:#474747"></div>
<div class="t" style="left:955.3px;top:186.7px;color:#d0d0d0">7</div>
<div class="a" style="left:965px;top:184.8px;width:9.6px;height:9.5px;background:#4772b3"></div>
<svg class="a" style="left:965px;top:184.8px" width="10" height="10" viewBox="0 0 10 10"><path d="M5,1.2 L8.2,2.5 Q8.2,7 5,8.6 Q1.8,7 1.8,2.5 Z" fill="#f4f4f4"/><path d="M3.5,5 L4.7,6.2 L6.8,3.8" fill="none" stroke="#4772b3" stroke-width="0.9"/></svg>
<div class="a" style="left:974.6px;top:184.8px;width:12px;height:9.5px;background:#3d3d3d"></div>
<svg class="a" style="left:976.5px;top:185.5px" width="9" height="8" viewBox="0 0 9 8"><rect x="1" y="1" width="4.5" height="5" fill="none" stroke="#c8c8c8" stroke-width="0.8"/><rect x="3" y="2.5" width="4.5" height="5" fill="#3d3d3d" stroke="#c8c8c8" stroke-width="0.8"/></svg>
<div class="a" style="left:986.6px;top:184.8px;width:9.5px;height:9.5px;background:#3d3d3d;border-radius:0 2px 2px 0"></div>
<svg class="a" style="left:988.3px;top:186.5px" width="6" height="6" viewBox="0 0 6 6"><path d="M0.5,0.5 L5.5,5.5 M5.5,0.5 L0.5,5.5" stroke="#c8c8c8" stroke-width="0.8"/></svg>
<div class="t" style="right:100.4px;transform-origin:100% 50%;top:200.5px;color:#cfcfcf">Seed</div>
<div class="a" style="left:909.9px;top:198.7px;width:65px;height:9.6px;background:#545454;border-radius:2px;overflow:hidden"></div><div class="t" style="left:909.9px;width:65px;text-align:center;transform-origin:50% 50%;top:200.5px;color:#e4e4e4">0</div>
<svg class="a" style="left:976.2px;top:198.9px" width="9.4" height="9.2" viewBox="0 0 10 10"><rect x="0.5" y="0.5" width="9" height="9" rx="1.6" fill="#a8a8a8"/><rect x="1.3" y="1.3" width="7.4" height="7.4" rx="0.6" fill="#3c3c3c"/><path d="M5.5,1.4 L5.5,4.5 M1.4,3 L8.6,3 M7,1.4 L7,4.5" stroke="#9a9a9a" stroke-width="0.5"/><rect x="2.6" y="1.2" width="1.8" height="7.6" fill="#f4f4f4"/><rect x="1.2" y="4.6" width="7.6" height="1.9" fill="#f4f4f4"/><path d="M5,7.6 L8.6,7.6" stroke="#e0e0e0" stroke-width="0.9"/></svg>
<div class="a" style="left:990.2px;top:202.3px;width:2.5px;height:2.5px;border-radius:1.25px;background:#ececec"></div>
<div class="a" style="left:854.9px;top:212.5px;width:120px;height:9.6px;background:#1f1f1f;border-radius:2px"></div>
<div class="t" style="left:858.4px;top:214.3px;color:#dcdcdc">Surface</div>
<div class="t" style="right:100.4px;transform-origin:100% 50%;top:228.2px;color:#cfcfcf">Material</div>
<div class="a" style="left:909.9px;top:226.4px;width:65px;height:9.6px;background:#1d1d1d;border-radius:2px"></div>
<svg class="a" style="left:911px;top:226.7px" width="9" height="9" viewBox="0 0 9 9"><circle cx="4.5" cy="4.5" r="3.6" fill="#f0f0f0"/><path d="M4.5,0.9 A3.6,3.6 0 0 0 0.9,4.5 L4.5,4.5 Z M4.5,4.5 L8.1,4.5 A3.6,3.6 0 0 1 4.5,8.1 Z" fill="#2a2a2a"/></svg>
<div class="t" style="left:922.8px;top:228.2px;color:#e0e0e0">Wood Live UV</div>
<svg class="a" style="left:966.8px;top:228.7px" width="5" height="5" viewBox="0 0 5 5"><path d="M0.5,0.5 L4.5,4.5 M4.5,0.5 L0.5,4.5" stroke="#c8c8c8" stroke-width="0.7"/></svg>
<div class="a" style="left:909.9px;top:242.2px;width:6.2px;height:6.2px;background:#4772b3;border-radius:1px"></div>
<svg class="a" style="left:909.9px;top:242.2px" width="7" height="7" viewBox="0 0 7 7"><path d="M1.3,3.5 L2.8,5 L5.6,1.5" fill="none" stroke="#fff" stroke-width="1"/></svg>
<div class="t" style="left:918.2px;top:242.3px;color:#e4e4e4">Live UV</div>
<svg class="a" style="left:976.2px;top:240.7px" width="9.4" height="9.2" viewBox="0 0 10 10"><rect x="0.5" y="0.5" width="9" height="9" rx="1.6" fill="#a8a8a8"/><rect x="1.3" y="1.3" width="7.4" height="7.4" rx="0.6" fill="#3c3c3c"/><path d="M5.5,1.4 L5.5,4.5 M1.4,3 L8.6,3 M7,1.4 L7,4.5" stroke="#9a9a9a" stroke-width="0.5"/><rect x="2.6" y="1.2" width="1.8" height="7.6" fill="#f4f4f4"/><rect x="1.2" y="4.6" width="7.6" height="1.9" fill="#f4f4f4"/><path d="M5,7.6 L8.6,7.6" stroke="#e0e0e0" stroke-width="0.9"/></svg>
<div class="a" style="left:990.2px;top:244.1px;width:2.5px;height:2.5px;border-radius:1.25px;background:#ececec"></div>
<div class="a" style="left:909.9px;top:256.0px;width:6.2px;height:6.2px;background:#4a4a4a;border-radius:1px"></div>
<div class="t" style="left:918.2px;top:256.1px;color:#d4d4d4">Auto Smooth</div>
<svg class="a" style="left:976.2px;top:254.5px" width="9.4" height="9.2" viewBox="0 0 10 10"><rect x="0.5" y="0.5" width="9" height="9" rx="1.6" fill="#a8a8a8"/><rect x="1.3" y="1.3" width="7.4" height="7.4" rx="0.6" fill="#3c3c3c"/><path d="M5.5,1.4 L5.5,4.5 M1.4,3 L8.6,3 M7,1.4 L7,4.5" stroke="#9a9a9a" stroke-width="0.5"/><rect x="2.6" y="1.2" width="1.8" height="7.6" fill="#f4f4f4"/><rect x="1.2" y="4.6" width="7.6" height="1.9" fill="#f4f4f4"/><path d="M5,7.6 L8.6,7.6" stroke="#e0e0e0" stroke-width="0.9"/></svg>
<div class="a" style="left:990.2px;top:257.9px;width:2.5px;height:2.5px;border-radius:1.25px;background:#ececec"></div>
<div class="t" style="right:100.4px;transform-origin:100% 50%;top:269.9px;color:#cfcfcf">Subdivision</div>
<div class="a" style="left:909.9px;top:268.1px;width:65px;height:9.6px;background:#545454;border-radius:2px;overflow:hidden"></div><div class="t" style="left:909.9px;width:65px;text-align:center;transform-origin:50% 50%;top:269.9px;color:#e4e4e4">2</div>
<div class="a" style="left:990.2px;top:271.7px;width:2.5px;height:2.5px;border-radius:1.25px;background:#ececec"></div>
<div class="t" style="right:100.4px;transform-origin:100% 50%;top:283.7px;color:#cfcfcf">Bevel</div>
<div class="a" style="left:909.9px;top:281.9px;width:65px;height:9.6px;background:#545454;border-radius:2px;overflow:hidden"><div class="a" style="left:0;top:0;width:39.9px;height:9.6px;background:#4772b3"></div></div><div class="t" style="left:909.9px;width:65px;text-align:center;transform-origin:50% 50%;top:283.7px;color:#e4e4e4">0.619</div>
<svg class="a" style="left:976.2px;top:282.1px" width="9.4" height="9.2" viewBox="0 0 10 10"><rect x="0.5" y="0.5" width="9" height="9" rx="1.6" fill="#a8a8a8"/><rect x="1.3" y="1.3" width="7.4" height="7.4" rx="0.6" fill="#3c3c3c"/><path d="M5.5,1.4 L5.5,4.5 M1.4,3 L8.6,3 M7,1.4 L7,4.5" stroke="#9a9a9a" stroke-width="0.5"/><rect x="2.6" y="1.2" width="1.8" height="7.6" fill="#f4f4f4"/><rect x="1.2" y="4.6" width="7.6" height="1.9" fill="#f4f4f4"/><path d="M5,7.6 L8.6,7.6" stroke="#e0e0e0" stroke-width="0.9"/></svg>
<div class="a" style="left:990.2px;top:285.5px;width:2.5px;height:2.5px;border-radius:1.25px;background:#ececec"></div>
<div class="t" style="right:100.4px;transform-origin:100% 50%;top:297.6px;color:#cfcfcf">Noise Scale</div>
<div class="a" style="left:909.9px;top:295.8px;width:65px;height:9.6px;background:#545454;border-radius:2px;overflow:hidden"></div><div class="t" style="left:909.9px;width:65px;text-align:center;transform-origin:50% 50%;top:297.6px;color:#e4e4e4">1.000</div>
<svg class="a" style="left:976.2px;top:296.0px" width="9.4" height="9.2" viewBox="0 0 10 10"><rect x="0.5" y="0.5" width="9" height="9" rx="1.6" fill="#a8a8a8"/><rect x="1.3" y="1.3" width="7.4" height="7.4" rx="0.6" fill="#3c3c3c"/><path d="M5.5,1.4 L5.5,4.5 M1.4,3 L8.6,3 M7,1.4 L7,4.5" stroke="#9a9a9a" stroke-width="0.5"/><rect x="2.6" y="1.2" width="1.8" height="7.6" fill="#f4f4f4"/><rect x="1.2" y="4.6" width="7.6" height="1.9" fill="#f4f4f4"/><path d="M5,7.6 L8.6,7.6" stroke="#e0e0e0" stroke-width="0.9"/></svg>
<div class="a" style="left:990.2px;top:299.4px;width:2.5px;height:2.5px;border-radius:1.25px;background:#ececec"></div>
<div class="t" style="right:100.4px;transform-origin:100% 50%;top:311.4px;color:#cfcfcf">Noise Power</div>
<div class="a" style="left:909.9px;top:309.6px;width:65px;height:9.6px;background:#545454;border-radius:2px;overflow:hidden"></div><div class="t" style="left:909.9px;width:65px;text-align:center;transform-origin:50% 50%;top:311.4px;color:#e4e4e4">0.000</div>
<svg class="a" style="left:976.2px;top:309.8px" width="9.4" height="9.2" viewBox="0 0 10 10"><rect x="0.5" y="0.5" width="9" height="9" rx="1.6" fill="#a8a8a8"/><rect x="1.3" y="1.3" width="7.4" height="7.4" rx="0.6" fill="#3c3c3c"/><path d="M5.5,1.4 L5.5,4.5 M1.4,3 L8.6,3 M7,1.4 L7,4.5" stroke="#9a9a9a" stroke-width="0.5"/><rect x="2.6" y="1.2" width="1.8" height="7.6" fill="#f4f4f4"/><rect x="1.2" y="4.6" width="7.6" height="1.9" fill="#f4f4f4"/><path d="M5,7.6 L8.6,7.6" stroke="#e0e0e0" stroke-width="0.9"/></svg>
<div class="a" style="left:990.2px;top:313.2px;width:2.5px;height:2.5px;border-radius:1.25px;background:#ececec"></div>
<div class="a" style="left:854.9px;top:323.9px;width:120px;height:9.6px;background:#1f1f1f;border-radius:2px"></div>
<div class="t" style="left:858.4px;top:325.7px;color:#dcdcdc">Generation</div>
<div class="t" style="right:100.4px;transform-origin:100% 50%;top:339.6px;color:#cfcfcf">Rotation</div>
<div class="a" style="left:909.9px;top:337.8px;width:65px;height:9.6px;background:#545454;border-radius:2px;overflow:hidden"></div><div class="t" style="left:909.9px;width:65px;text-align:center;transform-origin:50% 50%;top:339.6px;color:#e4e4e4">0°</div>
<svg class="a" style="left:976.2px;top:338.0px" width="9.4" height="9.2" viewBox="0 0 10 10"><rect x="0.5" y="0.5" width="9" height="9" rx="1.6" fill="#a8a8a8"/><rect x="1.3" y="1.3" width="7.4" height="7.4" rx="0.6" fill="#3c3c3c"/><path d="M5.5,1.4 L5.5,4.5 M1.4,3 L8.6,3 M7,1.4 L7,4.5" stroke="#9a9a9a" stroke-width="0.5"/><rect x="2.6" y="1.2" width="1.8" height="7.6" fill="#f4f4f4"/><rect x="1.2" y="4.6" width="7.6" height="1.9" fill="#f4f4f4"/><path d="M5,7.6 L8.6,7.6" stroke="#e0e0e0" stroke-width="0.9"/></svg>
<div class="a" style="left:990.2px;top:341.4px;width:2.5px;height:2.5px;border-radius:1.25px;background:#ececec"></div>
<div class="t" style="right:100.4px;transform-origin:100% 50%;top:353.4px;color:#cfcfcf">Length</div>
<div class="a" style="left:909.9px;top:351.6px;width:65px;height:9.6px;background:#545454;border-radius:2px;overflow:hidden"></div><div class="t" style="left:909.9px;width:65px;text-align:center;transform-origin:50% 50%;top:353.4px;color:#e4e4e4">0.580</div>
<svg class="a" style="left:976.2px;top:351.8px" width="9.4" height="9.2" viewBox="0 0 10 10"><rect x="0.5" y="0.5" width="9" height="9" rx="1.6" fill="#a8a8a8"/><rect x="1.3" y="1.3" width="7.4" height="7.4" rx="0.6" fill="#3c3c3c"/><path d="M5.5,1.4 L5.5,4.5 M1.4,3 L8.6,3 M7,1.4 L7,4.5" stroke="#9a9a9a" stroke-width="0.5"/><rect x="2.6" y="1.2" width="1.8" height="7.6" fill="#f4f4f4"/><rect x="1.2" y="4.6" width="7.6" height="1.9" fill="#f4f4f4"/><path d="M5,7.6 L8.6,7.6" stroke="#e0e0e0" stroke-width="0.9"/></svg>
<div class="a" style="left:990.2px;top:355.2px;width:2.5px;height:2.5px;border-radius:1.25px;background:#ececec"></div>
<div class="t" style="right:100.4px;transform-origin:100% 50%;top:367.3px;color:#cfcfcf">Length Random...</div>
<div class="a" style="left:909.9px;top:365.5px;width:65px;height:9.6px;background:#545454;border-radius:2px;overflow:hidden"></div><div class="t" style="left:909.9px;width:65px;text-align:center;transform-origin:50% 50%;top:367.3px;color:#e4e4e4">0.000</div>
<svg class="a" style="left:976.2px;top:365.7px" width="9.4" height="9.2" viewBox="0 0 10 10"><rect x="0.5" y="0.5" width="9" height="9" rx="1.6" fill="#a8a8a8"/><rect x="1.3" y="1.3" width="7.4" height="7.4" rx="0.6" fill="#3c3c3c"/><path d="M5.5,1.4 L5.5,4.5 M1.4,3 L8.6,3 M7,1.4 L7,4.5" stroke="#9a9a9a" stroke-width="0.5"/><rect x="2.6" y="1.2" width="1.8" height="7.6" fill="#f4f4f4"/><rect x="1.2" y="4.6" width="7.6" height="1.9" fill="#f4f4f4"/><path d="M5,7.6 L8.6,7.6" stroke="#e0e0e0" stroke-width="0.9"/></svg>
<div class="a" style="left:990.2px;top:369.1px;width:2.5px;height:2.5px;border-radius:1.25px;background:#ececec"></div>
<div class="t" style="right:100.4px;transform-origin:100% 50%;top:381.1px;color:#cfcfcf">Width</div>
<div class="a" style="left:909.9px;top:379.3px;width:65px;height:9.6px;background:#545454;border-radius:2px;overflow:hidden"></div><div class="t" style="left:909.9px;width:65px;text-align:center;transform-origin:50% 50%;top:381.1px;color:#e4e4e4">0.280</div>
<svg class="a" style="left:976.2px;top:379.5px" width="9.4" height="9.2" viewBox="0 0 10 10"><rect x="0.5" y="0.5" width="9" height="9" rx="1.6" fill="#a8a8a8"/><rect x="1.3" y="1.3" width="7.4" height="7.4" rx="0.6" fill="#3c3c3c"/><path d="M5.5,1.4 L5.5,4.5 M1.4,3 L8.6,3 M7,1.4 L7,4.5" stroke="#9a9a9a" stroke-width="0.5"/><rect x="2.6" y="1.2" width="1.8" height="7.6" fill="#f4f4f4"/><rect x="1.2" y="4.6" width="7.6" height="1.9" fill="#f4f4f4"/><path d="M5,7.6 L8.6,7.6" stroke="#e0e0e0" stroke-width="0.9"/></svg>
<div class="a" style="left:990.2px;top:382.9px;width:2.5px;height:2.5px;border-radius:1.25px;background:#ececec"></div>
<div class="t" style="right:100.4px;transform-origin:100% 50%;top:395.2px;color:#cfcfcf">Width Randomn...</div>
<div class="a" style="left:909.9px;top:393.4px;width:65px;height:9.6px;background:#545454;border-radius:2px;overflow:hidden"></div><div class="t" style="left:909.9px;width:65px;text-align:center;transform-origin:50% 50%;top:395.2px;color:#e4e4e4">0.000</div>
<svg class="a" style="left:976.2px;top:393.6px" width="9.4" height="9.2" viewBox="0 0 10 10"><rect x="0.5" y="0.5" width="9" height="9" rx="1.6" fill="#a8a8a8"/><rect x="1.3" y="1.3" width="7.4" height="7.4" rx="0.6" fill="#3c3c3c"/><path d="M5.5,1.4 L5.5,4.5 M1.4,3 L8.6,3 M7,1.4 L7,4.5" stroke="#9a9a9a" stroke-width="0.5"/><rect x="2.6" y="1.2" width="1.8" height="7.6" fill="#f4f4f4"/><rect x="1.2" y="4.6" width="7.6" height="1.9" fill="#f4f4f4"/><path d="M5,7.6 L8.6,7.6" stroke="#e0e0e0" stroke-width="0.9"/></svg>
<div class="a" style="left:990.2px;top:397.0px;width:2.5px;height:2.5px;border-radius:1.25px;background:#ececec"></div>
<div class="t" style="right:100.4px;transform-origin:100% 50%;top:408.9px;color:#cfcfcf">Thickness</div>
<div class="a" style="left:909.9px;top:407.1px;width:65px;height:9.6px;background:#545454;border-radius:2px;overflow:hidden"></div><div class="t" style="left:909.9px;width:65px;text-align:center;transform-origin:50% 50%;top:408.9px;color:#e4e4e4">0.200</div>
<svg class="a" style="left:976.2px;top:407.3px" width="9.4" height="9.2" viewBox="0 0 10 10"><rect x="0.5" y="0.5" width="9" height="9" rx="1.6" fill="#a8a8a8"/><rect x="1.3" y="1.3" width="7.4" height="7.4" rx="0.6" fill="#3c3c3c"/><path d="M5.5,1.4 L5.5,4.5 M1.4,3 L8.6,3 M7,1.4 L7,4.5" stroke="#9a9a9a" stroke-width="0.5"/><rect x="2.6" y="1.2" width="1.8" height="7.6" fill="#f4f4f4"/><rect x="1.2" y="4.6" width="7.6" height="1.9" fill="#f4f4f4"/><path d="M5,7.6 L8.6,7.6" stroke="#e0e0e0" stroke-width="0.9"/></svg>
<div class="a" style="left:990.2px;top:410.7px;width:2.5px;height:2.5px;border-radius:1.25px;background:#ececec"></div>
<div class="t" style="right:100.4px;transform-origin:100% 50%;top:422.8px;color:#cfcfcf">Thickness Rand...</div>
<div class="a" style="left:909.9px;top:421.0px;width:65px;height:9.6px;background:#545454;border-radius:2px;overflow:hidden"></div><div class="t" style="left:909.9px;width:65px;text-align:center;transform-origin:50% 50%;top:422.8px;color:#e4e4e4">0.000</div>
<svg class="a" style="left:976.2px;top:421.2px" width="9.4" height="9.2" viewBox="0 0 10 10"><rect x="0.5" y="0.5" width="9" height="9" rx="1.6" fill="#a8a8a8"/><rect x="1.3" y="1.3" width="7.4" height="7.4" rx="0.6" fill="#3c3c3c"/><path d="M5.5,1.4 L5.5,4.5 M1.4,3 L8.6,3 M7,1.4 L7,4.5" stroke="#9a9a9a" stroke-width="0.5"/><rect x="2.6" y="1.2" width="1.8" height="7.6" fill="#f4f4f4"/><rect x="1.2" y="4.6" width="7.6" height="1.9" fill="#f4f4f4"/><path d="M5,7.6 L8.6,7.6" stroke="#e0e0e0" stroke-width="0.9"/></svg>
<div class="a" style="left:990.2px;top:424.6px;width:2.5px;height:2.5px;border-radius:1.25px;background:#ececec"></div>
<div class="t" style="right:100.4px;transform-origin:100% 50%;top:436.7px;color:#cfcfcf">Height</div>
<div class="a" style="left:909.9px;top:434.9px;width:65px;height:9.6px;background:#545454;border-radius:2px;overflow:hidden"></div><div class="t" style="left:909.9px;width:65px;text-align:center;transform-origin:50% 50%;top:436.7px;color:#e4e4e4">0.000</div>
<svg class="a" style="left:976.2px;top:435.1px" width="9.4" height="9.2" viewBox="0 0 10 10"><rect x="0.5" y="0.5" width="9" height="9" rx="1.6" fill="#a8a8a8"/><rect x="1.3" y="1.3" width="7.4" height="7.4" rx="0.6" fill="#3c3c3c"/><path d="M5.5,1.4 L5.5,4.5 M1.4,3 L8.6,3 M7,1.4 L7,4.5" stroke="#9a9a9a" stroke-width="0.5"/><rect x="2.6" y="1.2" width="1.8" height="7.6" fill="#f4f4f4"/><rect x="1.2" y="4.6" width="7.6" height="1.9" fill="#f4f4f4"/><path d="M5,7.6 L8.6,7.6" stroke="#e0e0e0" stroke-width="0.9"/></svg>
<div class="a" style="left:990.2px;top:438.5px;width:2.5px;height:2.5px;border-radius:1.25px;background:#ececec"></div>
<div class="t" style="right:100.4px;transform-origin:100% 50%;top:450.6px;color:#cfcfcf">Height Offset</div>
<div class="a" style="left:909.9px;top:448.8px;width:65px;height:9.6px;background:#545454;border-radius:2px;overflow:hidden"></div><div class="t" style="left:909.9px;width:65px;text-align:center;transform-origin:50% 50%;top:450.6px;color:#e4e4e4">0.000</div>
<svg class="a" style="left:976.2px;top:449.0px" width="9.4" height="9.2" viewBox="0 0 10 10"><rect x="0.5" y="0.5" width="9" height="9" rx="1.6" fill="#a8a8a8"/><rect x="1.3" y="1.3" width="7.4" height="7.4" rx="0.6" fill="#3c3c3c"/><path d="M5.5,1.4 L5.5,4.5 M1.4,3 L8.6,3 M7,1.4 L7,4.5" stroke="#9a9a9a" stroke-width="0.5"/><rect x="2.6" y="1.2" width="1.8" height="7.6" fill="#f4f4f4"/><rect x="1.2" y="4.6" width="7.6" height="1.9" fill="#f4f4f4"/><path d="M5,7.6 L8.6,7.6" stroke="#e0e0e0" stroke-width="0.9"/></svg>
<div class="a" style="left:990.2px;top:452.4px;width:2.5px;height:2.5px;border-radius:1.25px;background:#ececec"></div>
<!-- STATUS -->
<svg class="a" style="left:5px;top:554.5px" width="7" height="10" viewBox="0 0 7 10"><rect x="0.8" y="0.8" width="5.2" height="8.4" rx="2" fill="none" stroke="#bdbdbd" stroke-width="0.8"/><rect x="1.2" y="1.2" width="2.2" height="3.2" fill="#dcdcdc"/></svg>
<div class="t" style="left:17.9px;top:556.2px;color:#c4c4c4">Select</div>
<svg class="a" style="left:116px;top:554.5px" width="7" height="10" viewBox="0 0 7 10"><rect x="0.8" y="0.8" width="5.2" height="8.4" rx="2" fill="none" stroke="#bdbdbd" stroke-width="0.8"/><rect x="3" y="1.5" width="0.8" height="3" fill="#dcdcdc"/></svg>
<div class="t" style="left:128.4px;top:556.2px;color:#c4c4c4">Center View to Mouse</div>
<svg class="a" style="left:227px;top:554.5px" width="7" height="10" viewBox="0 0 7 10"><rect x="0.8" y="0.8" width="5.2" height="8.4" rx="2" fill="none" stroke="#bdbdbd" stroke-width="0.8"/><rect x="3.4" y="1.2" width="2.2" height="3.2" fill="#dcdcdc"/></svg>
<div class="t" style="left:520px;top:556.2px;color:#b4b4b4;font-size:6.95px">Collection | BézierCircle.001 | Verts:165,977 | Faces:143,491 | Tris:286,532 | Objects:0/26 | Duration: 00:10+10 (Frame 1/250) | Memory: 1.86 GiB | VRAM: 6.9/8.0 GiB | 4.1.1</div>

<!-- BANNER -->
<div class="a" style="left:518px;top:423px;width:471px;height:115.5px;border-radius:48px;background:rgba(0,0,0,0.55);filter:blur(1.2px)"></div>
<div class="a" style="left:516.7px;top:420.6px;width:471.8px;height:115.2px;border-radius:48px;background:linear-gradient(#8f8f8f,#e0e0e0 2.2%,#ffffff 3.5%,#ffffff 6%,#d0d0d0 12%,#b4b4b4 50%,#a8a8a8 92%,#9e9e9e 97%,#8a8a8a 100%);box-shadow:inset 2px 0 1.5px rgba(0,0,0,0.25),inset -1.5px 0 1px rgba(0,0,0,0.35)"></div>
<div class="a" style="left:522.8px;top:427.2px;width:461.4px;height:105.6px;border-radius:38px;background:#161616"></div>
<div class="a" style="left:523.5px;top:427.8px;width:459.7px;height:103.7px;border-radius:37px;background:linear-gradient(90deg,#a85c08,#c87410 2%,#e68a12 6%,#f09010 50%,#e68a12 94%,#c87410 98%,#a85c08)"></div>
<div class="a" style="left:523.5px;top:427.8px;width:459.7px;height:103.7px;border-radius:37px;background:linear-gradient(#ffb050,rgba(255,160,40,0.85) 2.5%,rgba(240,140,20,0.2) 5.4%,rgba(0,0,0,0) 8%,rgba(0,0,0,0) 92%,rgba(255,200,120,0.9) 94.5%,#ffb030 96.5%,#f59300 98.5%,#6a3800 100%)"></div>
<div class="a" style="left:529.8px;top:433.4px;width:447.2px;height:92.2px;border-radius:32px;background:#326696;box-shadow:0 0 1px #326696"></div>
<div class="t" style="left:534.6px;top:465.2px;font-size:25px;font-weight:bold;color:#000;transform-origin:0 0;transform:scaleX(0.897);word-spacing:-2.5px;-webkit-text-stroke:4.4px #000">Draw custom curves that turn into blocks</div>
<div class="t" style="left:534.6px;top:465.2px;font-size:25px;font-weight:bold;color:#fff;transform-origin:0 0;transform:scaleX(0.897);word-spacing:-2.5px;-webkit-text-stroke:1.1px #fff">Draw custom curves that turn into blocks</div>

</body></html>
